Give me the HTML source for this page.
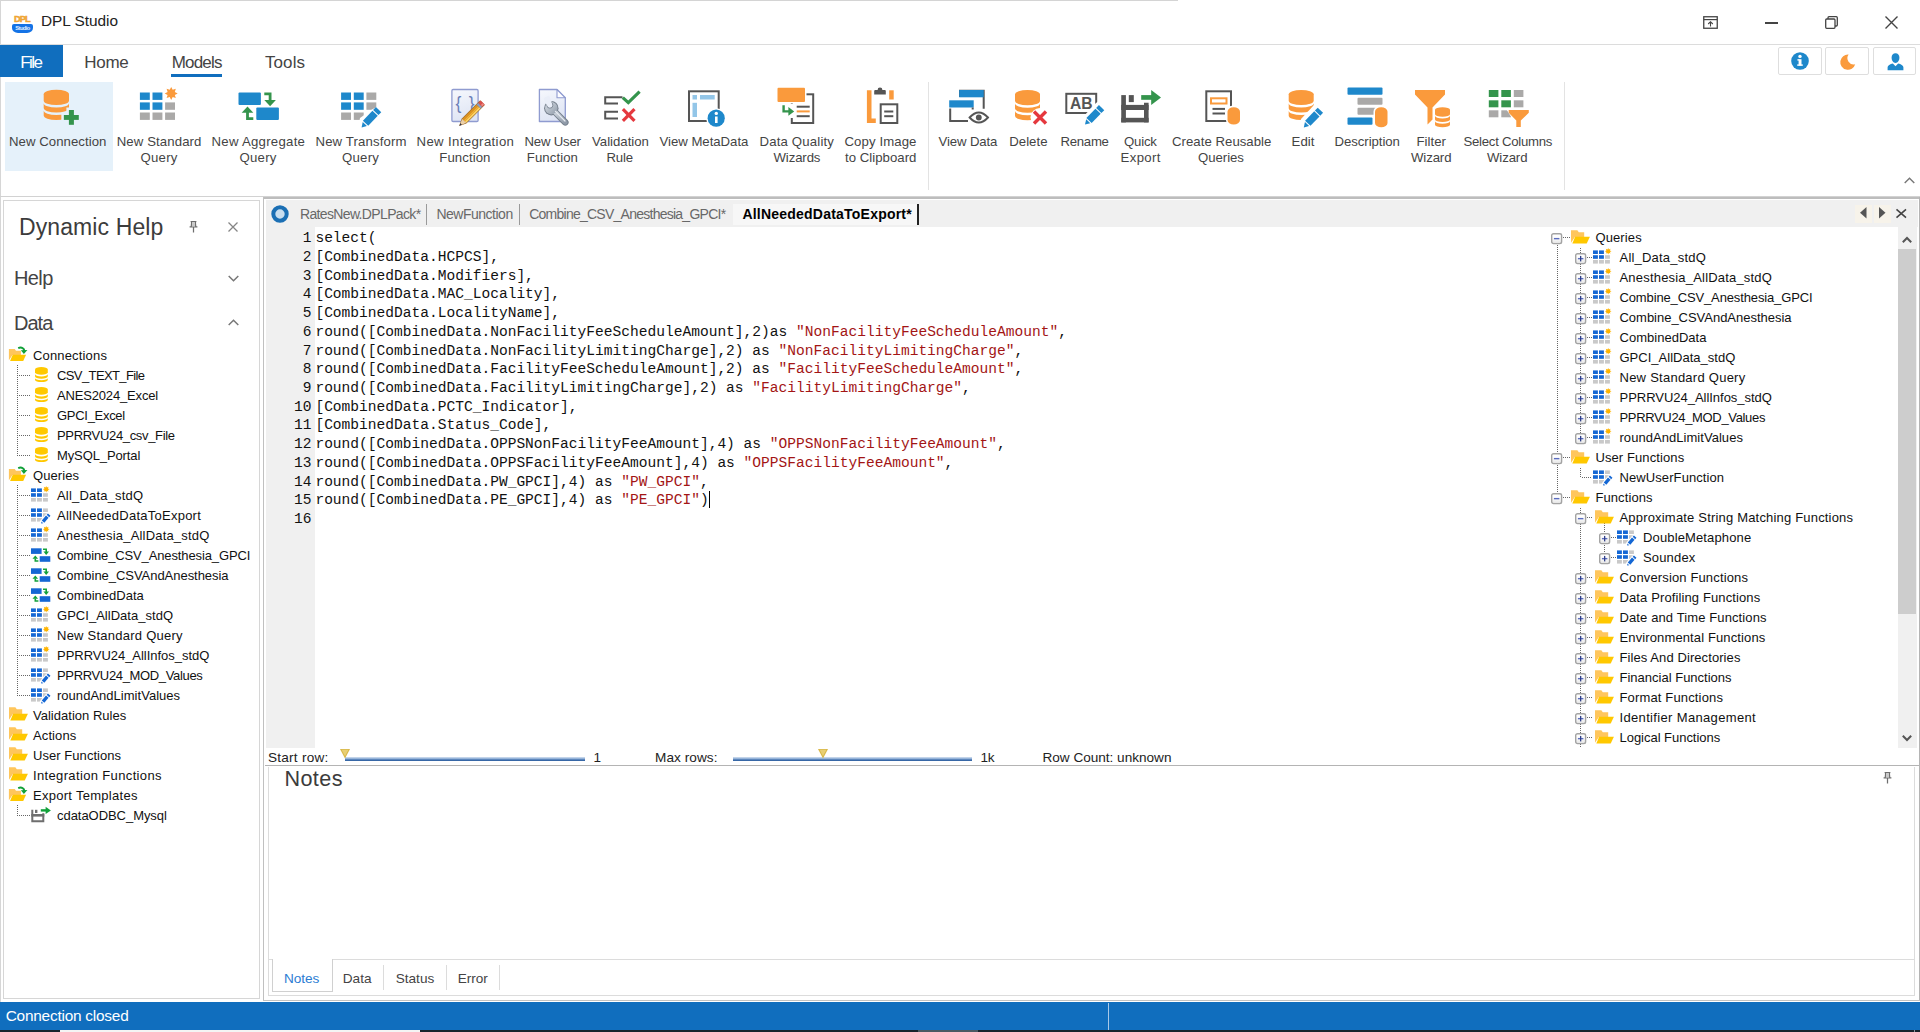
<!DOCTYPE html>
<html><head><meta charset="utf-8"><title>DPL Studio</title>
<style>
html,body{margin:0;padding:0;}
body{width:1920px;height:1032px;position:relative;overflow:hidden;background:#fff;font-family:"Liberation Sans",sans-serif;}
.t{position:absolute;white-space:pre;}
.r{position:absolute;}
svg{overflow:visible;}
.c{font-family:"Liberation Mono",monospace;font-size:14.578px;line-height:20px;color:#111;}
.s{color:#a31515;}
</style></head><body>
<div class="r" style="left:0.00px;top:0.00px;width:1178.00px;height:1.00px;background:#d4d4d4;"></div>
<div class="r" style="left:0.00px;top:0.00px;width:1.00px;height:1002.00px;background:#d6d6d6;"></div>
<div class="r" style="left:0.00px;top:44.00px;width:1920.00px;height:1.00px;background:#dcdcdc;"></div>
<span class="t" style="left:13.90px;top:13px;font-size:9.30px;line-height:13px;color:#efa535;font-weight:bold;letter-spacing:-0.850px;-webkit-text-stroke:0.5px #efa535;">DPL</span>
<div class="r" style="left:12.30px;top:24.00px;width:20.60px;height:8.70px;background:#1473e6;border-radius:2px 2px 6px 6px / 2px 2px 5px 5px;"></div>
<span class="t" style="left:15.30px;top:24px;font-size:5.70px;line-height:8px;color:#e6f0ff;font-weight:bold;letter-spacing:-0.546px;">Studio</span>
<span class="t" style="left:41.00px;top:10px;font-size:15.40px;line-height:22px;color:#222;letter-spacing:-0.037px;">DPL Studio</span>
<svg class="r" style="left:1703.00px;top:16.00px" width="15" height="13" viewBox="0 0 15 13"><rect x="0.75" y="0.75" width="13.5" height="11.5" fill="none" stroke="#444" stroke-width="1.3"/><path d="M0.75 3.6H14.25" stroke="#444" stroke-width="1.2"/><path d="M7.5 10.5V5.8M5.2 8L7.5 5.7L9.8 8" fill="none" stroke="#444" stroke-width="1.1"/></svg>
<div class="r" style="left:1765.00px;top:22.30px;width:12.50px;height:1.40px;background:#444;"></div>
<svg class="r" style="left:1824.50px;top:16.00px" width="13" height="13" viewBox="0 0 13 13"><rect x="0.7" y="3" width="9.3" height="9.3" rx="1" fill="none" stroke="#444" stroke-width="1.3"/><path d="M3 3V1.7a1 1 0 0 1 1-1H11.3a1 1 0 0 1 1 1V9a1 1 0 0 1-1 1H10" fill="none" stroke="#444" stroke-width="1.3"/></svg>
<svg class="r" style="left:1885.00px;top:16.20px" width="13" height="13" viewBox="0 0 13 13"><path d="M0.5 0.5L12.5 12.5M12.5 0.5L0.5 12.5" stroke="#444" stroke-width="1.4"/></svg>
<div class="r" style="left:0.00px;top:45.00px;width:62.50px;height:32.30px;background:#106ebe;"></div>
<span class="t" style="left:20.30px;top:51px;font-size:17.00px;line-height:24px;color:#fff;letter-spacing:-1.565px;">File</span>
<span class="t" style="left:84.20px;top:51px;font-size:17.00px;line-height:24px;color:#444444;letter-spacing:-0.249px;">Home</span>
<span class="t" style="left:171.70px;top:51px;font-size:17.00px;line-height:24px;color:#444444;letter-spacing:-0.800px;">Models</span>
<span class="t" style="left:265.00px;top:51px;font-size:17.00px;line-height:24px;color:#444444;letter-spacing:0.078px;">Tools</span>
<div class="r" style="left:171.30px;top:74.00px;width:51.20px;height:3.30px;background:#106ebe;"></div>
<div class="r" style="left:1778.30px;top:47.00px;width:43.60px;height:28.20px;background:#fff;border:1px solid #dedede;border-radius:2px;box-sizing:border-box;"></div>
<div class="r" style="left:1825.40px;top:47.00px;width:43.60px;height:28.20px;background:#fff;border:1px solid #dedede;border-radius:2px;box-sizing:border-box;"></div>
<div class="r" style="left:1872.90px;top:47.00px;width:43.60px;height:28.20px;background:#fff;border:1px solid #dedede;border-radius:2px;box-sizing:border-box;"></div>
<svg class="r" style="left:1791.00px;top:52.20px" width="18" height="18" viewBox="0 0 18 18"><circle cx="9" cy="9" r="8.8" fill="#1e88cb"/><rect x="7.6" y="7.2" width="2.9" height="6.3" fill="#fff"/><rect x="6.4" y="7.2" width="2" height="1.4" fill="#fff"/><rect x="6.2" y="12.4" width="5.6" height="1.4" fill="#fff"/><circle cx="9" cy="4.4" r="1.7" fill="#fff"/></svg>
<svg class="r" style="left:1839.50px;top:53.50px" width="16" height="16" viewBox="0 0 16 16"><path d="M8.6 0.6A7.6 7.6 0 1 0 15.2 10.2A6.2 6.2 0 0 1 8.6 0.6Z" fill="#fa9a3c"/></svg>
<svg class="r" style="left:1886.50px;top:52.50px" width="17" height="18" viewBox="0 0 17 18"><path d="M8.5 0.3c2.4 0 3.9 1.8 3.9 4.4c0 2.7-1.6 5.2-3.9 5.2S4.6 7.4 4.6 4.7C4.6 2.1 6.1 0.3 8.5 0.3Z" fill="#1e88cb"/><path d="M0.6 17.3V14.2c0-1.7 2.6-2.9 5.2-3.6L8.5 13.2L11.2 10.6c2.6 0.7 5.2 1.9 5.2 3.6V17.3Z" fill="#1e88cb"/></svg>
<svg class="r" style="left:1903.50px;top:177.00px" width="11" height="7" viewBox="0 0 11 7"><path d="M0.7 6L5.5 1.2L10.3 6" fill="none" stroke="#777" stroke-width="1.4"/></svg>
<div class="r" style="left:5.00px;top:81.50px;width:107.50px;height:89.70px;background:#e5f1fa;"></div>
<div class="r" style="left:928.00px;top:82.00px;width:1.00px;height:108.00px;background:#e3e3e3;"></div>
<div class="r" style="left:1564.00px;top:82.00px;width:1.00px;height:108.00px;background:#e3e3e3;"></div>
<span class="t" style="left:9.00px;top:133px;font-size:13.20px;line-height:18px;color:#444444;letter-spacing:0.050px;">New Connection</span>
<span class="t" style="left:116.75px;top:133px;font-size:13.20px;line-height:18px;color:#444444;letter-spacing:0.100px;">New Standard</span>
<span class="t" style="left:140.50px;top:149px;font-size:13.20px;line-height:18px;color:#444444;letter-spacing:0.264px;">Query</span>
<span class="t" style="left:211.50px;top:133px;font-size:13.20px;line-height:18px;color:#444444;letter-spacing:0.270px;">New Aggregate</span>
<span class="t" style="left:239.50px;top:149px;font-size:13.20px;line-height:18px;color:#444444;letter-spacing:0.264px;">Query</span>
<span class="t" style="left:315.50px;top:133px;font-size:13.20px;line-height:18px;color:#444444;letter-spacing:0.126px;">New Transform</span>
<span class="t" style="left:342.00px;top:149px;font-size:13.20px;line-height:18px;color:#444444;letter-spacing:0.264px;">Query</span>
<span class="t" style="left:416.50px;top:133px;font-size:13.20px;line-height:18px;color:#444444;letter-spacing:0.361px;">New Integration</span>
<span class="t" style="left:439.25px;top:149px;font-size:13.20px;line-height:18px;color:#444444;letter-spacing:0.089px;">Function</span>
<span class="t" style="left:524.50px;top:133px;font-size:13.20px;line-height:18px;color:#444444;letter-spacing:-0.206px;">New User</span>
<span class="t" style="left:526.75px;top:149px;font-size:13.20px;line-height:18px;color:#444444;letter-spacing:0.089px;">Function</span>
<span class="t" style="left:592.00px;top:133px;font-size:13.20px;line-height:18px;color:#444444;">Validation</span>
<span class="t" style="left:606.50px;top:149px;font-size:13.20px;line-height:18px;color:#444444;letter-spacing:-0.215px;">Rule</span>
<span class="t" style="left:659.50px;top:133px;font-size:13.20px;line-height:18px;color:#444444;letter-spacing:-0.023px;">View MetaData</span>
<span class="t" style="left:759.50px;top:133px;font-size:13.20px;line-height:18px;color:#444444;letter-spacing:0.170px;">Data Quality</span>
<span class="t" style="left:773.50px;top:149px;font-size:13.20px;line-height:18px;color:#444444;letter-spacing:-0.112px;">Wizards</span>
<span class="t" style="left:844.50px;top:133px;font-size:13.20px;line-height:18px;color:#444444;letter-spacing:0.092px;">Copy Image</span>
<span class="t" style="left:845.00px;top:149px;font-size:13.20px;line-height:18px;color:#444444;letter-spacing:0.030px;">to Clipboard</span>
<span class="t" style="left:938.50px;top:133px;font-size:13.20px;line-height:18px;color:#444444;letter-spacing:-0.116px;">View Data</span>
<span class="t" style="left:1009.25px;top:133px;font-size:13.20px;line-height:18px;color:#444444;letter-spacing:0.019px;">Delete</span>
<span class="t" style="left:1060.50px;top:133px;font-size:13.20px;line-height:18px;color:#444444;letter-spacing:-0.279px;">Rename</span>
<span class="t" style="left:1124.00px;top:133px;font-size:13.20px;line-height:18px;color:#444444;letter-spacing:-0.190px;">Quick</span>
<span class="t" style="left:1120.50px;top:149px;font-size:13.20px;line-height:18px;color:#444444;letter-spacing:0.370px;">Export</span>
<span class="t" style="left:1172.00px;top:133px;font-size:13.20px;line-height:18px;color:#444444;letter-spacing:0.031px;">Create Reusable</span>
<span class="t" style="left:1198.00px;top:149px;font-size:13.20px;line-height:18px;color:#444444;letter-spacing:-0.037px;">Queries</span>
<span class="t" style="left:1291.50px;top:133px;font-size:13.20px;line-height:18px;color:#444444;letter-spacing:0.085px;">Edit</span>
<span class="t" style="left:1334.50px;top:133px;font-size:13.20px;line-height:18px;color:#444444;letter-spacing:-0.053px;">Description</span>
<span class="t" style="left:1416.50px;top:133px;font-size:13.20px;line-height:18px;color:#444444;letter-spacing:0.034px;">Filter</span>
<span class="t" style="left:1411.00px;top:149px;font-size:13.20px;line-height:18px;color:#444444;letter-spacing:-0.114px;">Wizard</span>
<span class="t" style="left:1463.50px;top:133px;font-size:13.20px;line-height:18px;color:#444444;letter-spacing:-0.265px;">Select Columns</span>
<span class="t" style="left:1487.00px;top:149px;font-size:13.20px;line-height:18px;color:#444444;letter-spacing:-0.114px;">Wizard</span>
<svg class="r" style="left:0.00px;top:80.00px" width="1920" height="60" viewBox="0 80 1920 60"><path d="M43.70 94.15A12.65 4.35 0 0 1 69.00 94.15V100.68A12.65 4.35 0 0 1 43.70 100.68Z" fill="#fa9a3c"/><path d="M43.70 103.18A12.65 4.35 0 0 0 69.00 103.18V108.12A12.65 4.35 0 0 1 43.70 108.12Z" fill="#fa9a3c"/><path d="M43.70 110.61A12.65 4.35 0 0 0 69.00 110.61V115.55A12.65 4.35 0 0 1 43.70 115.55Z" fill="#fa9a3c"/><path d="M68.9 110H73.9V115H78.8V119.9H73.9V124.8H68.9V119.9H63.85V115H68.9Z" fill="#e5f1fa" stroke="#e5f1fa" stroke-width="5"/><rect x="68.90" y="110.00" width="5.00" height="14.80" fill="#34944c" rx="0"/><rect x="63.85" y="115.00" width="14.95" height="4.90" fill="#34944c" rx="0"/><rect x="139.90" y="92.50" width="9.90" height="7.40" fill="#1e88cb" rx="0"/><rect x="152.50" y="92.50" width="9.90" height="7.40" fill="#1e88cb" rx="0"/><rect x="139.90" y="102.40" width="9.90" height="7.40" fill="#1e88cb" rx="0"/><rect x="152.50" y="102.40" width="9.90" height="7.40" fill="#1e88cb" rx="0"/><rect x="165.10" y="102.40" width="9.90" height="7.40" fill="#aaa9a8" rx="0"/><rect x="139.90" y="112.50" width="9.90" height="7.40" fill="#aaa9a8" rx="0"/><rect x="152.50" y="112.50" width="9.90" height="7.40" fill="#aaa9a8" rx="0"/><rect x="165.10" y="112.50" width="9.90" height="7.40" fill="#aaa9a8" rx="0"/><polygon points="171.20,86.90 172.69,89.80 175.80,88.80 174.80,91.91 177.70,93.40 174.80,94.89 175.80,98.00 172.69,97.00 171.20,99.90 169.71,97.00 166.60,98.00 167.60,94.89 164.70,93.40 167.60,91.91 166.60,88.80 169.71,89.80" fill="#fa9a3c"/><rect x="238.50" y="92.50" width="22.40" height="12.40" fill="#1e88cb" rx="1"/><rect x="256.30" y="107.50" width="22.60" height="12.40" fill="#1e88cb" rx="1"/><path d="M264.3 93.8H270.1V101" fill="none" stroke="#34944c" stroke-width="2.8"/><polygon points="264.3,100 275.9,100 270.1,106.2" fill="#34944c"/><path d="M253.3 118.6H247.5V112" fill="none" stroke="#34944c" stroke-width="2.8"/><polygon points="241.7,112.8 253.3,112.8 247.5,106.6" fill="#34944c"/><rect x="341.10" y="92.50" width="9.90" height="7.40" fill="#1e88cb" rx="0"/><rect x="353.80" y="92.50" width="9.90" height="7.40" fill="#1e88cb" rx="0"/><rect x="366.40" y="92.50" width="9.90" height="7.40" fill="#aaa9a8" rx="0"/><rect x="341.10" y="102.40" width="9.90" height="7.40" fill="#1e88cb" rx="0"/><rect x="353.80" y="102.40" width="9.90" height="7.40" fill="#1e88cb" rx="0"/><rect x="366.40" y="102.40" width="9.90" height="7.40" fill="#aaa9a8" rx="0"/><rect x="341.10" y="112.50" width="9.90" height="7.40" fill="#aaa9a8" rx="0"/><rect x="353.80" y="112.50" width="9.90" height="7.40" fill="#aaa9a8" rx="0"/><polygon points="372,109.5 380,105 385,111 368,127 358,129 360,118" fill="#fff"/><polygon points="381.28,112.16 378.46,115.10 373.11,109.99 375.92,107.04" fill="#1e88cb"/><polygon points="377.77,115.82 368.25,125.80 362.90,120.69 372.42,110.71" fill="#1e88cb"/><polygon points="366.90,126.03 361.60,127.40 362.72,122.04" fill="#1e88cb"/><defs><linearGradient id="dg" x1="0" y1="0" x2="0.3" y2="1"><stop offset="0" stop-color="#f6f8fd"/><stop offset="1" stop-color="#dfe5f4"/></linearGradient><linearGradient id="wg" x1="0" y1="0" x2="1" y2="1"><stop offset="0" stop-color="#d9dfe7"/><stop offset="1" stop-color="#8f9aa8"/></linearGradient></defs><rect x="451.9" y="89.5" width="26.2" height="32" rx="1.2" fill="url(#dg)" stroke="#8f9bd0" stroke-width="1.3"/><text x="455.6" y="109.3" font-size="17.5" fill="#6a7fb8" font-family="Liberation Sans, sans-serif" textLength="19" lengthAdjust="spacing">{}</text><polygon points="484.82,104.95 466.33,123.44 459.12,125.98 461.66,118.77 480.15,100.28" fill="#9a6a2a"/><polygon points="484.68,104.38 482.13,106.93 478.17,102.97 480.72,100.42" fill="#d9504c"/><polygon points="482.67,103.22 480.83,105.06 482.12,106.35 483.96,104.51" fill="#f08a84"/><polygon points="482.13,106.93 480.44,108.62 476.48,104.66 478.17,102.97" fill="#8a9cc4"/><polygon points="480.44,108.62 466.19,122.87 464.87,121.55 479.12,107.30" fill="#ffd566"/><polygon points="479.12,107.30 464.87,121.55 463.55,120.23 477.80,105.98" fill="#f5b233"/><polygon points="477.80,105.98 463.55,120.23 462.23,118.91 476.48,104.66" fill="#dc9220"/><polygon points="466.19,122.87 461.81,124.72 460.38,123.29 462.23,118.91" fill="#ecd0a8"/><polygon points="461.81,124.72 459.40,125.70 460.38,123.29" fill="#2b3350"/><path d="M539.4 89.5H557L565.3 97.8V121.5H539.4Z" fill="url(#dg)" stroke="#8f9bd0" stroke-width="1.3" stroke-linejoin="round"/><path d="M557 89.5V97.8H565.3Z" fill="#fdfdff" stroke="#8f9bd0" stroke-width="1.1" stroke-linejoin="round"/><path d="M553.5 110.5L565.3 122.3" stroke="#76808d" stroke-width="6.6" stroke-linecap="round"/><circle cx="551.3" cy="108.2" r="7.2" fill="#76808d"/><path d="M553.5 110.5L565.3 122.3" stroke="url(#wg)" stroke-width="4.6" stroke-linecap="round"/><circle cx="551.3" cy="108.2" r="6.2" fill="url(#wg)"/><path d="M555.4 111.4L565 121" stroke="#e6eaf0" stroke-width="1.2" stroke-linecap="round"/><polygon points="552.65,104.00 549.05,95.75 543.55,98.15 547.15,106.40" fill="#eaeef8"/><circle cx="549.90" cy="105.20" r="3.00" fill="#eaeef8" stroke="#76808d" stroke-width="0.9"/><polygon points="552.19,104.20 548.59,95.95 544.01,97.95 547.61,106.20" fill="#eaeef8"/><path d="M622.5 97.2H605.2V103.5H618" fill="none" stroke="#555555" stroke-width="2"/><path d="M618 111.7H605.2V118.5H618" fill="none" stroke="#555555" stroke-width="2"/><path d="M622.8 97.6L628.3 102.6L639.6 91.6" fill="none" stroke="#34944c" stroke-width="3.2"/><path d="M622.90 109.20L634.50 120.80" stroke="#e5383e" stroke-width="3.2" fill="none"/><path d="M634.50 109.20L622.90 120.80" stroke="#e5383e" stroke-width="3.2" fill="none"/><rect x="689.00" y="91.30" width="29.70" height="29.70" fill="none" stroke="#555555" stroke-width="2"/><rect x="692.50" y="95.00" width="4.50" height="4.50" fill="#93c6e8" rx="0"/><rect x="700.00" y="95.00" width="14.70" height="4.50" fill="#93c6e8" rx="0"/><rect x="692.50" y="102.80" width="4.50" height="14.20" fill="#93c6e8" rx="0"/><circle cx="716.2" cy="118.2" r="10" fill="#fff"/><circle cx="716.2" cy="118.2" r="8.6" fill="#1e88cb"/><rect x="715.00" y="116.50" width="2.60" height="6.50" fill="#fff" rx="0"/><circle cx="716.3" cy="113.4" r="1.7" fill="#fff"/><rect x="791.80" y="94.30" width="21.40" height="28.70" fill="none" stroke="#555555" stroke-width="2"/><rect x="776.00" y="87.00" width="30.50" height="16.50" fill="#fff" rx="0"/><rect x="777.50" y="87.80" width="27.50" height="14.20" fill="#fa9a3c" rx="1"/><path d="M796.70 106.70L809.70 106.70" stroke="#555555" stroke-width="2" fill="none"/><path d="M796.70 111.40L809.70 111.40" stroke="#fa9a3c" stroke-width="2" fill="none"/><path d="M796.70 116.20L809.70 116.20" stroke="#555555" stroke-width="2" fill="none"/><rect x="781.00" y="104.00" width="15.00" height="14.00" fill="#fff" rx="0"/><path d="M783.6 105.3V111.4H789" fill="none" stroke="#34944c" stroke-width="2.4"/><polygon points="788.4,107 794.2,111.4 788.4,115.8" fill="#34944c"/><path d="M869.2 90.3V120.7H875.8" fill="none" stroke="#fa9a3c" stroke-width="4.6"/><rect x="889.20" y="90.30" width="4.50" height="9.20" fill="#fa9a3c" rx="0"/><path d="M874.2 94.5V91a1 1 0 0 1 1-1H877.6a2.4 2.4 0 0 1 4.8 0H884.8a1 1 0 0 1 1 1V94.5Z" fill="#555555"/><rect x="880.70" y="104.30" width="16.60" height="18.70" fill="none" stroke="#555555" stroke-width="2"/><path d="M884.20 111.50L893.30 111.50" stroke="#555555" stroke-width="2" fill="none"/><path d="M884.20 116.20L893.30 116.20" stroke="#555555" stroke-width="2" fill="none"/><path d="M960 97V90.8H983.7V108.7" fill="none" stroke="#555555" stroke-width="2"/><rect x="959.20" y="90.00" width="24.50" height="7.30" fill="#1e88cb" rx="0"/><path d="M950.2 107V121H968" fill="none" stroke="#555555" stroke-width="2"/><rect x="947.50" y="99.00" width="28.00" height="9.50" fill="#fff" rx="0"/><rect x="949.20" y="100.30" width="24.50" height="7.20" fill="#1e88cb" rx="0"/><path d="M972.70 107.50L972.70 109.50" stroke="#555555" stroke-width="2" fill="none"/><path d="M969.6 117.5Q978.8 107.5 988 117.5Q978.8 127.5 969.6 117.5Z" fill="#fff" stroke="#555555" stroke-width="1.9"/><circle cx="978.8" cy="117.5" r="2.9" fill="#555555"/><path d="M1015.00 94.30A12.50 4.30 0 0 1 1040.00 94.30V100.88A12.50 4.30 0 0 1 1015.00 100.88Z" fill="#fa9a3c"/><path d="M1015.00 103.39A12.50 4.30 0 0 0 1040.00 103.39V108.44A12.50 4.30 0 0 1 1015.00 108.44Z" fill="#fa9a3c"/><path d="M1015.00 110.95A12.50 4.30 0 0 0 1040.00 110.95V116.00A12.50 4.30 0 0 1 1015.00 116.00Z" fill="#fa9a3c"/><circle cx="1040" cy="117.5" r="9.5" fill="#fff"/><path d="M1034.00 111.50L1046.00 123.50" stroke="#e5383e" stroke-width="3.4" fill="none"/><path d="M1046.00 111.50L1034.00 123.50" stroke="#e5383e" stroke-width="3.4" fill="none"/><rect x="1066.30" y="93.80" width="29.90" height="19.20" fill="none" stroke="#555555" stroke-width="2"/><text x="1070" y="108.8" font-size="15.6" font-weight="bold" fill="#555555" font-family="Liberation Sans, sans-serif" textLength="22.6" lengthAdjust="spacingAndGlyphs">AB</text><polygon points="1096,103 1103,98 1109,106 1090,126 1080,128 1083,117" fill="#fff"/><polygon points="1104.25,110.18 1101.40,113.10 1096.11,107.93 1098.95,105.02" fill="#1e88cb"/><polygon points="1100.71,113.81 1091.66,123.07 1086.37,117.90 1095.41,108.64" fill="#1e88cb"/><polygon points="1090.31,123.29 1085.00,124.60 1086.18,119.26" fill="#1e88cb"/><rect x="1121.25" y="95.10" width="4.65" height="27.30" fill="#555555" rx="0"/><rect x="1128.80" y="95.10" width="5.00" height="7.00" fill="#555555" rx="0"/><rect x="1121.25" y="104.90" width="27.35" height="5.10" fill="#555555" rx="0"/><rect x="1144.00" y="102.75" width="4.60" height="19.65" fill="#555555" rx="0"/><rect x="1121.25" y="117.80" width="27.35" height="4.60" fill="#555555" rx="0"/><rect x="1141.20" y="95.10" width="10.80" height="4.70" fill="#34944c" rx="0"/><polygon points="1151.2,90.1 1161,97.5 1151.2,104.9" fill="#34944c"/><rect x="1206.30" y="91.30" width="24.70" height="29.70" fill="none" stroke="#555555" stroke-width="2"/><rect x="1211.00" y="98.30" width="15.50" height="5.20" fill="none" stroke="#fa9a3c" stroke-width="2"/><path d="M1212.50 108.90L1225.00 108.90" stroke="#555555" stroke-width="2" fill="none"/><path d="M1212.50 113.50L1225.00 113.50" stroke="#555555" stroke-width="2" fill="none"/><rect x="1226.00" y="105.80" width="15.50" height="20.20" fill="#fff" rx="6"/><rect x="1227.50" y="107.30" width="12.50" height="17.20" rx="6.25" ry="4.40" fill="#fa9a3c"/><path d="M1288.70 94.30A12.50 4.30 0 0 1 1313.70 94.30V100.81A12.50 4.30 0 0 1 1288.70 100.81Z" fill="#fa9a3c"/><path d="M1288.70 103.30A12.50 4.30 0 0 0 1313.70 103.30V108.25A12.50 4.30 0 0 1 1288.70 108.25Z" fill="#fa9a3c"/><path d="M1288.70 110.74A12.50 4.30 0 0 0 1313.70 110.74V115.70A12.50 4.30 0 0 1 1288.70 115.70Z" fill="#fa9a3c"/><polygon points="1314,105 1321,100.5 1327,108 1309,127 1299,130 1301,119" fill="#fff"/><polygon points="1323.06,112.77 1320.24,115.70 1314.91,110.56 1317.74,107.63" fill="#1e88cb"/><polygon points="1319.54,116.42 1310.46,125.83 1305.13,120.69 1314.22,111.28" fill="#1e88cb"/><polygon points="1309.11,126.06 1303.80,127.40 1304.95,122.05" fill="#1e88cb"/><rect x="1347.50" y="87.50" width="35.00" height="7.30" fill="#1e88cb" rx="1"/><rect x="1357.50" y="97.80" width="25.00" height="7.00" fill="#aaa9a8" rx="1"/><rect x="1357.50" y="107.80" width="25.00" height="7.00" fill="#aaa9a8" rx="1"/><rect x="1347.50" y="117.50" width="25.00" height="7.30" fill="#1e88cb" rx="1"/><rect x="1373.50" y="105.80" width="15.50" height="23.00" fill="#fff" rx="6"/><rect x="1375.00" y="107.30" width="12.50" height="20.00" rx="6.25" ry="4.40" fill="#fa9a3c"/><path d="M1415 90H1445V94.5L1432.5 107.5V119.5L1427.5 124.5V107.5L1415 94.5Z" fill="#fa9a3c"/><rect x="1433.50" y="106.00" width="18.00" height="22.50" fill="#fff" rx="5"/><path d="M1435.00 109.85A7.50 2.55 0 0 1 1450.00 109.85V114.19A7.50 2.55 0 0 1 1435.00 114.19Z" fill="#fa9a3c"/><path d="M1435.00 115.85A7.50 2.55 0 0 0 1450.00 115.85V119.47A7.50 2.55 0 0 1 1435.00 119.47Z" fill="#fa9a3c"/><path d="M1435.00 121.13A7.50 2.55 0 0 0 1450.00 121.13V124.75A7.50 2.55 0 0 1 1435.00 124.75Z" fill="#fa9a3c"/><rect x="1488.80" y="90.00" width="9.60" height="7.00" fill="#34944c" rx="0"/><rect x="1501.30" y="90.00" width="9.60" height="7.00" fill="#34944c" rx="0"/><rect x="1513.80" y="90.00" width="9.60" height="7.00" fill="#aaa9a8" rx="0"/><rect x="1488.80" y="100.30" width="9.60" height="7.00" fill="#34944c" rx="0"/><rect x="1501.30" y="100.30" width="9.60" height="7.00" fill="#34944c" rx="0"/><rect x="1513.80" y="100.30" width="9.60" height="7.00" fill="#aaa9a8" rx="0"/><rect x="1488.80" y="110.30" width="9.60" height="7.00" fill="#aaa9a8" rx="0"/><rect x="1501.30" y="110.30" width="9.60" height="7.00" fill="#aaa9a8" rx="0"/><polygon points="1505.8,108.5 1531,108.5 1531,114 1522.5,122 1522.5,128.5 1514.5,128.5 1514.5,122" fill="#fff"/><path d="M1508.7 110H1528.8V112.8L1520.8 120.5V127H1516.3V120.5L1508.7 112.8Z" fill="#fa9a3c"/></svg>
<div class="r" style="left:0.00px;top:195.70px;width:1920.00px;height:1.80px;background:#d2d2d2;"></div>
<!-- left panel -->
<div class="r" style="left:3.00px;top:200.00px;width:257.00px;height:799.00px;background:#fff;border:1px solid #d6d6d6;box-sizing:border-box;"></div>
<span class="t" style="left:19.00px;top:211px;font-size:23.00px;line-height:32px;color:#3c3c3c;letter-spacing:0.104px;">Dynamic Help</span>
<svg class="r" style="left:188.50px;top:221.00px" width="9" height="12" viewBox="0 0 9 12"><path d="M1.6 0.7H7.4M2.7 0.7L2.3 5.3M6.3 0.7L6.7 5.3M0.6 5.9H8.4M4.5 6V11.4" fill="none" stroke="#6e6e6e" stroke-width="1.25"/><path d="M3.2 1.2H5.8L6.1 5.4H2.9Z" fill="#c9c9c9"/></svg>
<svg class="r" style="left:228.00px;top:222.00px" width="10" height="10" viewBox="0 0 10 10"><path d="M0.5 0.5L9.5 9.5M9.5 0.5L0.5 9.5" stroke="#858585" stroke-width="1.25"/></svg>
<span class="t" style="left:14.00px;top:264px;font-size:20.00px;line-height:28px;color:#444444;letter-spacing:-0.610px;">Help</span>
<span class="t" style="left:14.00px;top:309px;font-size:20.00px;line-height:28px;color:#444444;letter-spacing:-0.983px;">Data</span>
<svg class="r" style="left:227.50px;top:274.50px" width="11" height="7" viewBox="0 0 11 7"><path d="M0.7 1L5.5 5.8L10.3 1" fill="none" stroke="#777" stroke-width="1.5"/></svg>
<svg class="r" style="left:227.50px;top:318.50px" width="11" height="7" viewBox="0 0 11 7"><path d="M0.7 6L5.5 1.2L10.3 6" fill="none" stroke="#777" stroke-width="1.5"/></svg>
<span class="t" style="left:33.00px;top:347px;font-size:13.00px;line-height:18px;color:#111;letter-spacing:0.163px;">Connections</span>
<svg class="r" style="left:8.00px;top:346.00px" width="20" height="17" viewBox="0 0 20 17"><path d="M0.9 3H6.7L8 4.7H12.9V9H4.5L0.9 14.3Z" fill="#ffc65c"/><path d="M4.7 8.8H18.1L15.2 14.9H2.1Z" fill="#ffc800"/><path d="M10.2 2.2C13.6 0.6 16.4 2.4 16.3 5" fill="none" stroke="#12a13a" stroke-width="2"/><polygon points="12.8,4.2 19.4,4 15.9,8" fill="#12a13a"/></svg>
<span class="t" style="left:57.00px;top:367px;font-size:13.00px;line-height:18px;color:#111;letter-spacing:-0.605px;">CSV_TEXT_File</span>
<div class="r" style="left:19.00px;top:375.00px;width:12.00px;height:1.00px;background:repeating-linear-gradient(to right,#666 0 1px,transparent 1px 2px);"></div>
<svg class="r" style="left:34.80px;top:367.30px" width="13" height="16" viewBox="0 0 13 16"><path d="M0 2.6A6.4 2.6 0 0 1 12.8 2.6V5.3A6.4 2.4 0 0 1 0 5.3Z" fill="#ffc800"/><path d="M0 7A6.4 2.4 0 0 0 12.8 7V9.3A6.4 2.4 0 0 1 0 9.3Z" fill="#ffc800"/><path d="M0 10.9A6.4 2.4 0 0 0 12.8 10.9V12.7A6.4 2.4 0 0 1 0 12.7Z" fill="#ffc800"/></svg>
<span class="t" style="left:57.00px;top:387px;font-size:13.00px;line-height:18px;color:#111;letter-spacing:-0.165px;">ANES2024_Excel</span>
<div class="r" style="left:19.00px;top:395.00px;width:12.00px;height:1.00px;background:repeating-linear-gradient(to right,#666 0 1px,transparent 1px 2px);"></div>
<svg class="r" style="left:34.80px;top:387.30px" width="13" height="16" viewBox="0 0 13 16"><path d="M0 2.6A6.4 2.6 0 0 1 12.8 2.6V5.3A6.4 2.4 0 0 1 0 5.3Z" fill="#ffc800"/><path d="M0 7A6.4 2.4 0 0 0 12.8 7V9.3A6.4 2.4 0 0 1 0 9.3Z" fill="#ffc800"/><path d="M0 10.9A6.4 2.4 0 0 0 12.8 10.9V12.7A6.4 2.4 0 0 1 0 12.7Z" fill="#ffc800"/></svg>
<span class="t" style="left:57.00px;top:407px;font-size:13.00px;line-height:18px;color:#111;letter-spacing:-0.289px;">GPCI_Excel</span>
<div class="r" style="left:19.00px;top:415.00px;width:12.00px;height:1.00px;background:repeating-linear-gradient(to right,#666 0 1px,transparent 1px 2px);"></div>
<svg class="r" style="left:34.80px;top:407.30px" width="13" height="16" viewBox="0 0 13 16"><path d="M0 2.6A6.4 2.6 0 0 1 12.8 2.6V5.3A6.4 2.4 0 0 1 0 5.3Z" fill="#ffc800"/><path d="M0 7A6.4 2.4 0 0 0 12.8 7V9.3A6.4 2.4 0 0 1 0 9.3Z" fill="#ffc800"/><path d="M0 10.9A6.4 2.4 0 0 0 12.8 10.9V12.7A6.4 2.4 0 0 1 0 12.7Z" fill="#ffc800"/></svg>
<span class="t" style="left:57.00px;top:427px;font-size:13.00px;line-height:18px;color:#111;letter-spacing:-0.326px;">PPRRVU24_csv_File</span>
<div class="r" style="left:19.00px;top:435.00px;width:12.00px;height:1.00px;background:repeating-linear-gradient(to right,#666 0 1px,transparent 1px 2px);"></div>
<svg class="r" style="left:34.80px;top:427.30px" width="13" height="16" viewBox="0 0 13 16"><path d="M0 2.6A6.4 2.6 0 0 1 12.8 2.6V5.3A6.4 2.4 0 0 1 0 5.3Z" fill="#ffc800"/><path d="M0 7A6.4 2.4 0 0 0 12.8 7V9.3A6.4 2.4 0 0 1 0 9.3Z" fill="#ffc800"/><path d="M0 10.9A6.4 2.4 0 0 0 12.8 10.9V12.7A6.4 2.4 0 0 1 0 12.7Z" fill="#ffc800"/></svg>
<span class="t" style="left:57.00px;top:447px;font-size:13.00px;line-height:18px;color:#111;letter-spacing:-0.112px;">MySQL_Portal</span>
<div class="r" style="left:19.00px;top:455.00px;width:12.00px;height:1.00px;background:repeating-linear-gradient(to right,#666 0 1px,transparent 1px 2px);"></div>
<svg class="r" style="left:34.80px;top:447.30px" width="13" height="16" viewBox="0 0 13 16"><path d="M0 2.6A6.4 2.6 0 0 1 12.8 2.6V5.3A6.4 2.4 0 0 1 0 5.3Z" fill="#ffc800"/><path d="M0 7A6.4 2.4 0 0 0 12.8 7V9.3A6.4 2.4 0 0 1 0 9.3Z" fill="#ffc800"/><path d="M0 10.9A6.4 2.4 0 0 0 12.8 10.9V12.7A6.4 2.4 0 0 1 0 12.7Z" fill="#ffc800"/></svg>
<span class="t" style="left:33.00px;top:467px;font-size:13.00px;line-height:18px;color:#111;letter-spacing:0.080px;">Queries</span>
<svg class="r" style="left:8.00px;top:466.00px" width="20" height="17" viewBox="0 0 20 17"><path d="M0.9 3H6.7L8 4.7H12.9V9H4.5L0.9 14.3Z" fill="#ffc65c"/><path d="M4.7 8.8H18.1L15.2 14.9H2.1Z" fill="#ffc800"/><path d="M10.2 2.2C13.6 0.6 16.4 2.4 16.3 5" fill="none" stroke="#12a13a" stroke-width="2"/><polygon points="12.8,4.2 19.4,4 15.9,8" fill="#12a13a"/></svg>
<span class="t" style="left:57.00px;top:487px;font-size:13.00px;line-height:18px;color:#111;letter-spacing:0.190px;">All_Data_stdQ</span>
<div class="r" style="left:19.00px;top:495.00px;width:12.00px;height:1.00px;background:repeating-linear-gradient(to right,#666 0 1px,transparent 1px 2px);"></div>
<svg class="r" style="left:31.00px;top:486.50px" width="18" height="15" viewBox="0 0 18 15"><rect x="0" y="1.4" width="4.9" height="3.6" fill="#1467d4"/><rect x="6" y="1.4" width="4.9" height="3.6" fill="#1467d4"/><rect x="0" y="6.2" width="4.9" height="3.6" fill="#1467d4"/><rect x="6" y="6.2" width="4.9" height="3.6" fill="#1467d4"/><rect x="12" y="6.2" width="4.9" height="3.6" fill="#c9c9c9"/><rect x="0" y="11" width="4.9" height="3.6" fill="#c9c9c9"/><rect x="6" y="11" width="4.9" height="3.6" fill="#c9c9c9"/><rect x="12" y="11" width="4.9" height="3.6" fill="#c9c9c9"/><polygon points="15.20,-1.10 15.93,0.44 17.53,-0.13 16.96,1.47 18.50,2.20 16.96,2.93 17.53,4.53 15.93,3.96 15.20,5.50 14.47,3.96 12.87,4.53 13.44,2.93 11.90,2.20 13.44,1.47 12.87,-0.13 14.47,0.44" fill="#ffb400"/></svg>
<span class="t" style="left:57.00px;top:507px;font-size:13.00px;line-height:18px;color:#111;letter-spacing:0.253px;">AllNeededDataToExport</span>
<div class="r" style="left:19.00px;top:515.00px;width:12.00px;height:1.00px;background:repeating-linear-gradient(to right,#666 0 1px,transparent 1px 2px);"></div>
<svg class="r" style="left:31.00px;top:506.50px" width="21" height="18" viewBox="0 0 21 18"><rect x="0" y="1.4" width="4.9" height="3.6" fill="#1467d4"/><rect x="6" y="1.4" width="4.9" height="3.6" fill="#1467d4"/><rect x="12" y="1.4" width="4.9" height="3.6" fill="#c9c9c9"/><rect x="0" y="6.2" width="4.9" height="3.6" fill="#1467d4"/><rect x="6" y="6.2" width="4.9" height="3.6" fill="#1467d4"/><rect x="12" y="6.2" width="4.9" height="3.6" fill="#c9c9c9"/><rect x="0" y="11" width="4.9" height="3.6" fill="#c9c9c9"/><rect x="6" y="11" width="4.9" height="3.6" fill="#c9c9c9"/><polygon points="15,7 18,5 21,8 12,18 8,18 9,14" fill="#fff"/><polygon points="19.47,8.73 18.23,10.13 15.69,7.87 16.93,6.47" fill="#1467d4"/><polygon points="17.56,10.87 13.30,15.67 10.76,13.42 15.02,8.62" fill="#1467d4"/><polygon points="12.29,16.25 10.20,16.60 10.31,14.49" fill="#1467d4"/></svg>
<span class="t" style="left:57.00px;top:527px;font-size:13.00px;line-height:18px;color:#111;letter-spacing:0.189px;">Anesthesia_AllData_stdQ</span>
<div class="r" style="left:19.00px;top:535.00px;width:12.00px;height:1.00px;background:repeating-linear-gradient(to right,#666 0 1px,transparent 1px 2px);"></div>
<svg class="r" style="left:31.00px;top:526.50px" width="18" height="15" viewBox="0 0 18 15"><rect x="0" y="1.4" width="4.9" height="3.6" fill="#1467d4"/><rect x="6" y="1.4" width="4.9" height="3.6" fill="#1467d4"/><rect x="0" y="6.2" width="4.9" height="3.6" fill="#1467d4"/><rect x="6" y="6.2" width="4.9" height="3.6" fill="#1467d4"/><rect x="12" y="6.2" width="4.9" height="3.6" fill="#c9c9c9"/><rect x="0" y="11" width="4.9" height="3.6" fill="#c9c9c9"/><rect x="6" y="11" width="4.9" height="3.6" fill="#c9c9c9"/><rect x="12" y="11" width="4.9" height="3.6" fill="#c9c9c9"/><polygon points="15.20,-1.10 15.93,0.44 17.53,-0.13 16.96,1.47 18.50,2.20 16.96,2.93 17.53,4.53 15.93,3.96 15.20,5.50 14.47,3.96 12.87,4.53 13.44,2.93 11.90,2.20 13.44,1.47 12.87,-0.13 14.47,0.44" fill="#ffb400"/></svg>
<span class="t" style="left:57.00px;top:547px;font-size:13.00px;line-height:18px;color:#111;letter-spacing:-0.125px;">Combine_CSV_Anesthesia_GPCI</span>
<div class="r" style="left:19.00px;top:555.00px;width:12.00px;height:1.00px;background:repeating-linear-gradient(to right,#666 0 1px,transparent 1px 2px);"></div>
<svg class="r" style="left:31.00px;top:547.00px" width="20" height="16" viewBox="0 0 20 16"><rect x="0" y="1.3" width="10.6" height="5.6" fill="#1467d4"/><rect x="8.7" y="9.2" width="10.6" height="5.6" fill="#1467d4"/><path d="M12 2.2H15.2V5" fill="none" stroke="#12a13a" stroke-width="1.6"/><polygon points="12.4,4.6 18,4.6 15.2,8" fill="#12a13a"/><path d="M7.4 14H4.3V11.4" fill="none" stroke="#12a13a" stroke-width="1.6"/><polygon points="1.5,11.8 7.1,11.8 4.3,8.4" fill="#12a13a"/></svg>
<span class="t" style="left:57.00px;top:567px;font-size:13.00px;line-height:18px;color:#111;letter-spacing:-0.038px;">Combine_CSVAndAnesthesia</span>
<div class="r" style="left:19.00px;top:575.00px;width:12.00px;height:1.00px;background:repeating-linear-gradient(to right,#666 0 1px,transparent 1px 2px);"></div>
<svg class="r" style="left:31.00px;top:567.00px" width="20" height="16" viewBox="0 0 20 16"><rect x="0" y="1.3" width="10.6" height="5.6" fill="#1467d4"/><rect x="8.7" y="9.2" width="10.6" height="5.6" fill="#1467d4"/><path d="M12 2.2H15.2V5" fill="none" stroke="#12a13a" stroke-width="1.6"/><polygon points="12.4,4.6 18,4.6 15.2,8" fill="#12a13a"/><path d="M7.4 14H4.3V11.4" fill="none" stroke="#12a13a" stroke-width="1.6"/><polygon points="1.5,11.8 7.1,11.8 4.3,8.4" fill="#12a13a"/></svg>
<span class="t" style="left:57.00px;top:587px;font-size:13.00px;line-height:18px;color:#111;letter-spacing:0.007px;">CombinedData</span>
<div class="r" style="left:19.00px;top:595.00px;width:12.00px;height:1.00px;background:repeating-linear-gradient(to right,#666 0 1px,transparent 1px 2px);"></div>
<svg class="r" style="left:31.00px;top:587.00px" width="20" height="16" viewBox="0 0 20 16"><rect x="0" y="1.3" width="10.6" height="5.6" fill="#1467d4"/><rect x="8.7" y="9.2" width="10.6" height="5.6" fill="#1467d4"/><path d="M12 2.2H15.2V5" fill="none" stroke="#12a13a" stroke-width="1.6"/><polygon points="12.4,4.6 18,4.6 15.2,8" fill="#12a13a"/><path d="M7.4 14H4.3V11.4" fill="none" stroke="#12a13a" stroke-width="1.6"/><polygon points="1.5,11.8 7.1,11.8 4.3,8.4" fill="#12a13a"/></svg>
<span class="t" style="left:57.00px;top:607px;font-size:13.00px;line-height:18px;color:#111;letter-spacing:0.025px;">GPCI_AllData_stdQ</span>
<div class="r" style="left:19.00px;top:615.00px;width:12.00px;height:1.00px;background:repeating-linear-gradient(to right,#666 0 1px,transparent 1px 2px);"></div>
<svg class="r" style="left:31.00px;top:606.50px" width="18" height="15" viewBox="0 0 18 15"><rect x="0" y="1.4" width="4.9" height="3.6" fill="#1467d4"/><rect x="6" y="1.4" width="4.9" height="3.6" fill="#1467d4"/><rect x="0" y="6.2" width="4.9" height="3.6" fill="#1467d4"/><rect x="6" y="6.2" width="4.9" height="3.6" fill="#1467d4"/><rect x="12" y="6.2" width="4.9" height="3.6" fill="#c9c9c9"/><rect x="0" y="11" width="4.9" height="3.6" fill="#c9c9c9"/><rect x="6" y="11" width="4.9" height="3.6" fill="#c9c9c9"/><rect x="12" y="11" width="4.9" height="3.6" fill="#c9c9c9"/><polygon points="15.20,-1.10 15.93,0.44 17.53,-0.13 16.96,1.47 18.50,2.20 16.96,2.93 17.53,4.53 15.93,3.96 15.20,5.50 14.47,3.96 12.87,4.53 13.44,2.93 11.90,2.20 13.44,1.47 12.87,-0.13 14.47,0.44" fill="#ffb400"/></svg>
<span class="t" style="left:57.00px;top:627px;font-size:13.00px;line-height:18px;color:#111;letter-spacing:0.242px;">New Standard Query</span>
<div class="r" style="left:19.00px;top:635.00px;width:12.00px;height:1.00px;background:repeating-linear-gradient(to right,#666 0 1px,transparent 1px 2px);"></div>
<svg class="r" style="left:31.00px;top:626.50px" width="18" height="15" viewBox="0 0 18 15"><rect x="0" y="1.4" width="4.9" height="3.6" fill="#1467d4"/><rect x="6" y="1.4" width="4.9" height="3.6" fill="#1467d4"/><rect x="0" y="6.2" width="4.9" height="3.6" fill="#1467d4"/><rect x="6" y="6.2" width="4.9" height="3.6" fill="#1467d4"/><rect x="12" y="6.2" width="4.9" height="3.6" fill="#c9c9c9"/><rect x="0" y="11" width="4.9" height="3.6" fill="#c9c9c9"/><rect x="6" y="11" width="4.9" height="3.6" fill="#c9c9c9"/><rect x="12" y="11" width="4.9" height="3.6" fill="#c9c9c9"/><polygon points="15.20,-1.10 15.93,0.44 17.53,-0.13 16.96,1.47 18.50,2.20 16.96,2.93 17.53,4.53 15.93,3.96 15.20,5.50 14.47,3.96 12.87,4.53 13.44,2.93 11.90,2.20 13.44,1.47 12.87,-0.13 14.47,0.44" fill="#ffb400"/></svg>
<span class="t" style="left:57.00px;top:647px;font-size:13.00px;line-height:18px;color:#111;letter-spacing:-0.031px;">PPRRVU24_AllInfos_stdQ</span>
<div class="r" style="left:19.00px;top:655.00px;width:12.00px;height:1.00px;background:repeating-linear-gradient(to right,#666 0 1px,transparent 1px 2px);"></div>
<svg class="r" style="left:31.00px;top:646.50px" width="18" height="15" viewBox="0 0 18 15"><rect x="0" y="1.4" width="4.9" height="3.6" fill="#1467d4"/><rect x="6" y="1.4" width="4.9" height="3.6" fill="#1467d4"/><rect x="0" y="6.2" width="4.9" height="3.6" fill="#1467d4"/><rect x="6" y="6.2" width="4.9" height="3.6" fill="#1467d4"/><rect x="12" y="6.2" width="4.9" height="3.6" fill="#c9c9c9"/><rect x="0" y="11" width="4.9" height="3.6" fill="#c9c9c9"/><rect x="6" y="11" width="4.9" height="3.6" fill="#c9c9c9"/><rect x="12" y="11" width="4.9" height="3.6" fill="#c9c9c9"/><polygon points="15.20,-1.10 15.93,0.44 17.53,-0.13 16.96,1.47 18.50,2.20 16.96,2.93 17.53,4.53 15.93,3.96 15.20,5.50 14.47,3.96 12.87,4.53 13.44,2.93 11.90,2.20 13.44,1.47 12.87,-0.13 14.47,0.44" fill="#ffb400"/></svg>
<span class="t" style="left:57.00px;top:667px;font-size:13.00px;line-height:18px;color:#111;letter-spacing:-0.343px;">PPRRVU24_MOD_Values</span>
<div class="r" style="left:19.00px;top:675.00px;width:12.00px;height:1.00px;background:repeating-linear-gradient(to right,#666 0 1px,transparent 1px 2px);"></div>
<svg class="r" style="left:31.00px;top:666.50px" width="21" height="18" viewBox="0 0 21 18"><rect x="0" y="1.4" width="4.9" height="3.6" fill="#1467d4"/><rect x="6" y="1.4" width="4.9" height="3.6" fill="#1467d4"/><rect x="12" y="1.4" width="4.9" height="3.6" fill="#c9c9c9"/><rect x="0" y="6.2" width="4.9" height="3.6" fill="#1467d4"/><rect x="6" y="6.2" width="4.9" height="3.6" fill="#1467d4"/><rect x="12" y="6.2" width="4.9" height="3.6" fill="#c9c9c9"/><rect x="0" y="11" width="4.9" height="3.6" fill="#c9c9c9"/><rect x="6" y="11" width="4.9" height="3.6" fill="#c9c9c9"/><polygon points="15,7 18,5 21,8 12,18 8,18 9,14" fill="#fff"/><polygon points="19.47,8.73 18.23,10.13 15.69,7.87 16.93,6.47" fill="#1467d4"/><polygon points="17.56,10.87 13.30,15.67 10.76,13.42 15.02,8.62" fill="#1467d4"/><polygon points="12.29,16.25 10.20,16.60 10.31,14.49" fill="#1467d4"/></svg>
<span class="t" style="left:57.00px;top:687px;font-size:13.00px;line-height:18px;color:#111;letter-spacing:0.027px;">roundAndLimitValues</span>
<div class="r" style="left:19.00px;top:695.00px;width:12.00px;height:1.00px;background:repeating-linear-gradient(to right,#666 0 1px,transparent 1px 2px);"></div>
<svg class="r" style="left:31.00px;top:686.50px" width="21" height="18" viewBox="0 0 21 18"><rect x="0" y="1.4" width="4.9" height="3.6" fill="#1467d4"/><rect x="6" y="1.4" width="4.9" height="3.6" fill="#1467d4"/><rect x="12" y="1.4" width="4.9" height="3.6" fill="#c9c9c9"/><rect x="0" y="6.2" width="4.9" height="3.6" fill="#1467d4"/><rect x="6" y="6.2" width="4.9" height="3.6" fill="#1467d4"/><rect x="12" y="6.2" width="4.9" height="3.6" fill="#c9c9c9"/><rect x="0" y="11" width="4.9" height="3.6" fill="#c9c9c9"/><rect x="6" y="11" width="4.9" height="3.6" fill="#c9c9c9"/><polygon points="15,7 18,5 21,8 12,18 8,18 9,14" fill="#fff"/><polygon points="19.47,8.73 18.23,10.13 15.69,7.87 16.93,6.47" fill="#1467d4"/><polygon points="17.56,10.87 13.30,15.67 10.76,13.42 15.02,8.62" fill="#1467d4"/><polygon points="12.29,16.25 10.20,16.60 10.31,14.49" fill="#1467d4"/></svg>
<span class="t" style="left:33.00px;top:707px;font-size:13.00px;line-height:18px;color:#111;letter-spacing:0.015px;">Validation Rules</span>
<svg class="r" style="left:7.70px;top:704.30px" width="22" height="18.7" viewBox="0 0 20 17"><path d="M0.9 3H6.7L8 4.7H12.9V9H4.5L0.9 14.3Z" fill="#ffc65c"/><path d="M4.7 8.8H18.1L15.2 14.9H2.1Z" fill="#ffc800"/></svg>
<span class="t" style="left:33.00px;top:727px;font-size:13.00px;line-height:18px;color:#111;letter-spacing:0.111px;">Actions</span>
<svg class="r" style="left:7.70px;top:724.30px" width="22" height="18.7" viewBox="0 0 20 17"><path d="M0.9 3H6.7L8 4.7H12.9V9H4.5L0.9 14.3Z" fill="#ffc65c"/><path d="M4.7 8.8H18.1L15.2 14.9H2.1Z" fill="#ffc800"/></svg>
<span class="t" style="left:33.00px;top:747px;font-size:13.00px;line-height:18px;color:#111;letter-spacing:0.052px;">User Functions</span>
<svg class="r" style="left:7.70px;top:744.30px" width="22" height="18.7" viewBox="0 0 20 17"><path d="M0.9 3H6.7L8 4.7H12.9V9H4.5L0.9 14.3Z" fill="#ffc65c"/><path d="M4.7 8.8H18.1L15.2 14.9H2.1Z" fill="#ffc800"/></svg>
<span class="t" style="left:33.00px;top:767px;font-size:13.00px;line-height:18px;color:#111;letter-spacing:0.355px;">Integration Functions</span>
<svg class="r" style="left:7.70px;top:764.30px" width="22" height="18.7" viewBox="0 0 20 17"><path d="M0.9 3H6.7L8 4.7H12.9V9H4.5L0.9 14.3Z" fill="#ffc65c"/><path d="M4.7 8.8H18.1L15.2 14.9H2.1Z" fill="#ffc800"/></svg>
<span class="t" style="left:33.00px;top:787px;font-size:13.00px;line-height:18px;color:#111;letter-spacing:0.280px;">Export Templates</span>
<svg class="r" style="left:8.00px;top:786.00px" width="20" height="17" viewBox="0 0 20 17"><path d="M0.9 3H6.7L8 4.7H12.9V9H4.5L0.9 14.3Z" fill="#ffc65c"/><path d="M4.7 8.8H18.1L15.2 14.9H2.1Z" fill="#ffc800"/><path d="M10.2 2.2C13.6 0.6 16.4 2.4 16.3 5" fill="none" stroke="#12a13a" stroke-width="2"/><polygon points="12.8,4.2 19.4,4 15.9,8" fill="#12a13a"/></svg>
<span class="t" style="left:57.00px;top:807px;font-size:13.00px;line-height:18px;color:#111;letter-spacing:-0.046px;">cdataODBC_Mysql</span>
<div class="r" style="left:19.00px;top:815.00px;width:12.00px;height:1.00px;background:repeating-linear-gradient(to right,#666 0 1px,transparent 1px 2px);"></div>
<svg class="r" style="left:31.00px;top:807.00px" width="20" height="16" viewBox="0 0 20 16"><path d="M1.3 2.8V14.2H12.3V6.3" fill="none" stroke="#6e6e6e" stroke-width="2"/><rect x="0.3" y="7" width="13" height="2.6" fill="#6e6e6e"/><rect x="4" y="2.8" width="2.4" height="3.2" fill="#6e6e6e"/><rect x="9.8" y="2.2" width="5.4" height="2.4" fill="#12a13a"/><polygon points="14.6,-0.3 19.9,3.4 14.6,7.1" fill="#12a13a"/></svg>
<div class="r" style="left:17.00px;top:365.00px;width:1.00px;height:91.00px;background:repeating-linear-gradient(to bottom,#666 0 1px,transparent 1px 2px);"></div>
<div class="r" style="left:17.00px;top:485.00px;width:1.00px;height:211.00px;background:repeating-linear-gradient(to bottom,#666 0 1px,transparent 1px 2px);"></div>
<div class="r" style="left:17.00px;top:805.00px;width:1.00px;height:11.00px;background:repeating-linear-gradient(to bottom,#666 0 1px,transparent 1px 2px);"></div>
<!-- editor -->
<div class="r" style="left:263.00px;top:197.00px;width:1657.00px;height:2.00px;background:#bdbdbd;"></div>
<div class="r" style="left:263.20px;top:197.00px;width:1.30px;height:804.00px;background:#c0c0c0;"></div>
<div class="r" style="left:1918.80px;top:197.00px;width:1.20px;height:804.00px;background:#b4b4b4;"></div>
<div class="r" style="left:265.50px;top:199.80px;width:1652.00px;height:27.60px;background:#f0f0f0;"></div>
<svg class="r" style="left:270.60px;top:205.30px" width="18" height="18" viewBox="0 0 18 18"><circle cx="9" cy="9" r="6.7" fill="#c9deef" stroke="#1b6fb4" stroke-width="4"/></svg>
<span class="t" style="left:300.00px;top:204px;font-size:14.00px;line-height:20px;color:#686868;letter-spacing:-0.650px;">RatesNew.DPLPack*</span>
<div class="r" style="left:426.00px;top:204.00px;width:1.00px;height:20.50px;background:#9a9a9a;"></div>
<span class="t" style="left:436.40px;top:204px;font-size:14.00px;line-height:20px;color:#686868;letter-spacing:-0.490px;">NewFunction</span>
<div class="r" style="left:519.00px;top:204.00px;width:1.00px;height:20.50px;background:#9a9a9a;"></div>
<span class="t" style="left:529.20px;top:204px;font-size:14.00px;line-height:20px;color:#686868;letter-spacing:-0.749px;">Combine_CSV_Anesthesia_GPCI*</span>
<div class="r" style="left:732.50px;top:204.00px;width:184.30px;height:21.00px;background:#f7f7f7;"></div>
<span class="t" style="left:742.40px;top:204px;font-size:14.00px;line-height:20px;color:#000;font-weight:bold;letter-spacing:0.221px;">AllNeededDataToExport*</span>
<div class="r" style="left:916.80px;top:204.00px;width:2.00px;height:21.00px;background:#222;"></div>
<div class="r" style="left:1855.00px;top:205.00px;width:17.00px;height:18.30px;background:#f7f3ea;"></div>
<div class="r" style="left:1874.30px;top:205.00px;width:16.70px;height:18.30px;background:#f7f3ea;"></div>
<svg class="r" style="left:1859.70px;top:207.30px" width="7" height="12" viewBox="0 0 7 12"><polygon points="6.5,0 6.5,11.6 0,5.8" fill="#555"/></svg>
<svg class="r" style="left:1878.70px;top:207.30px" width="7" height="12" viewBox="0 0 7 12"><polygon points="0,0 0,11.6 6.5,5.8" fill="#555"/></svg>
<svg class="r" style="left:1896.00px;top:209.00px" width="11" height="9" viewBox="0 0 11 9"><path d="M0.5 0.3L10 8.6M10 0.3L0.5 8.6" stroke="#444" stroke-width="1.6"/></svg>
<div class="r" style="left:265.50px;top:227.40px;width:49.30px;height:521.00px;background:#f0f0f0;"></div>
<span class="t c" style="left:302.85px;top:228px">1</span>
<span class="t c" style="left:315.40px;top:228px">select(</span>
<span class="t c" style="left:302.85px;top:247px">2</span>
<span class="t c" style="left:315.40px;top:247px">[CombinedData.HCPCS],</span>
<span class="t c" style="left:302.85px;top:266px">3</span>
<span class="t c" style="left:315.40px;top:266px">[CombinedData.Modifiers],</span>
<span class="t c" style="left:302.85px;top:284px">4</span>
<span class="t c" style="left:315.40px;top:284px">[CombinedData.MAC_Locality],</span>
<span class="t c" style="left:302.85px;top:303px">5</span>
<span class="t c" style="left:315.40px;top:303px">[CombinedData.LocalityName],</span>
<span class="t c" style="left:302.85px;top:322px">6</span>
<span class="t c" style="left:315.40px;top:322px">round([CombinedData.NonFacilityFeeScheduleAmount],2)as <span class="s">&quot;NonFacilityFeeScheduleAmount&quot;</span>,</span>
<span class="t c" style="left:302.85px;top:341px">7</span>
<span class="t c" style="left:315.40px;top:341px">round([CombinedData.NonFacilityLimitingCharge],2) as <span class="s">&quot;NonFacilityLimitingCharge&quot;</span>,</span>
<span class="t c" style="left:302.85px;top:359px">8</span>
<span class="t c" style="left:315.40px;top:359px">round([CombinedData.FacilityFeeScheduleAmount],2) as <span class="s">&quot;FacilityFeeScheduleAmount&quot;</span>,</span>
<span class="t c" style="left:302.85px;top:378px">9</span>
<span class="t c" style="left:315.40px;top:378px">round([CombinedData.FacilityLimitingCharge],2) as <span class="s">&quot;FacilityLimitingCharge&quot;</span>,</span>
<span class="t c" style="left:294.10px;top:397px">10</span>
<span class="t c" style="left:315.40px;top:397px">[CombinedData.PCTC_Indicator],</span>
<span class="t c" style="left:294.10px;top:415px">11</span>
<span class="t c" style="left:315.40px;top:415px">[CombinedData.Status_Code],</span>
<span class="t c" style="left:294.10px;top:434px">12</span>
<span class="t c" style="left:315.40px;top:434px">round([CombinedData.OPPSNonFacilityFeeAmount],4) as <span class="s">&quot;OPPSNonFacilityFeeAmount&quot;</span>,</span>
<span class="t c" style="left:294.10px;top:453px">13</span>
<span class="t c" style="left:315.40px;top:453px">round([CombinedData.OPPSFacilityFeeAmount],4) as <span class="s">&quot;OPPSFacilityFeeAmount&quot;</span>,</span>
<span class="t c" style="left:294.10px;top:472px">14</span>
<span class="t c" style="left:315.40px;top:472px">round([CombinedData.PW_GPCI],4) as <span class="s">&quot;PW_GPCI&quot;</span>,</span>
<span class="t c" style="left:294.10px;top:490px">15</span>
<span class="t c" style="left:315.40px;top:490px">round([CombinedData.PE_GPCI],4) as <span class="s">&quot;PE_GPCI&quot;</span>)</span>
<span class="t c" style="left:294.10px;top:509px">16</span>
<div class="r" style="left:709.36px;top:491.33px;width:1.00px;height:17.00px;background:#000;"></div>
<svg class="r" style="left:0;top:0" width="0" height="0"><defs><linearGradient id="eg" x1="0" y1="0" x2="0" y2="1"><stop offset="0" stop-color="#ffffff"/><stop offset="0.5" stop-color="#fbfbfb"/><stop offset="1" stop-color="#e2e2e2"/></linearGradient></defs></svg>
<div class="r" style="left:1557.00px;top:243.00px;width:1.00px;height:250.00px;background:repeating-linear-gradient(to bottom,#666 0 1px,transparent 1px 2px);"></div>
<div class="r" style="left:1580.00px;top:248.00px;width:1.00px;height:190.00px;background:repeating-linear-gradient(to bottom,#666 0 1px,transparent 1px 2px);"></div>
<div class="r" style="left:1580.00px;top:468.00px;width:1.00px;height:10.00px;background:repeating-linear-gradient(to bottom,#666 0 1px,transparent 1px 2px);"></div>
<div class="r" style="left:1580.00px;top:508.00px;width:1.00px;height:240.00px;background:repeating-linear-gradient(to bottom,#666 0 1px,transparent 1px 2px);"></div>
<div class="r" style="left:1604.00px;top:523.00px;width:1.00px;height:35.00px;background:repeating-linear-gradient(to bottom,#666 0 1px,transparent 1px 2px);"></div>
<div class="r" style="left:1563.00px;top:237.00px;width:7.00px;height:1.00px;background:repeating-linear-gradient(to right,#666 0 1px,transparent 1px 2px);"></div>
<svg class="r" style="left:1551.35px;top:232.75px" width="11.3" height="11.3" viewBox="0 0 11.3 11.3"><rect x="0.7" y="0.7" width="9.9" height="9.9" rx="1.8" fill="url(#eg)" stroke="#a3a3a3" stroke-width="1.4"/><path d="M2.9 5.65H8.4" stroke="#5b6dc0" stroke-width="1.4"/></svg>
<svg class="r" style="left:1570.10px;top:226.90px" width="22" height="18.7" viewBox="0 0 20 17"><path d="M0.9 3H6.7L8 4.7H12.9V9H4.5L0.9 14.3Z" fill="#ffc65c"/><path d="M4.7 8.8H18.1L15.2 14.9H2.1Z" fill="#ffc800"/></svg>
<span class="t" style="left:1595.40px;top:229px;font-size:13.00px;line-height:18px;color:#111;letter-spacing:0.130px;">Queries</span>
<div class="r" style="left:1586.70px;top:257.00px;width:5.70px;height:1.00px;background:repeating-linear-gradient(to right,#666 0 1px,transparent 1px 2px);"></div>
<svg class="r" style="left:1575.05px;top:252.75px" width="11.3" height="11.3" viewBox="0 0 11.3 11.3"><rect x="0.7" y="0.7" width="9.9" height="9.9" rx="1.8" fill="url(#eg)" stroke="#a3a3a3" stroke-width="1.4"/><path d="M2.9 5.65H8.4" stroke="#5b6dc0" stroke-width="1.4"/><path d="M5.65 2.9V8.4" stroke="#2f3f86" stroke-width="1.3"/></svg>
<svg class="r" style="left:1593.40px;top:249.00px" width="18" height="15" viewBox="0 0 18 15"><rect x="0" y="1.4" width="4.9" height="3.6" fill="#1467d4"/><rect x="6" y="1.4" width="4.9" height="3.6" fill="#1467d4"/><rect x="0" y="6.2" width="4.9" height="3.6" fill="#1467d4"/><rect x="6" y="6.2" width="4.9" height="3.6" fill="#1467d4"/><rect x="12" y="6.2" width="4.9" height="3.6" fill="#c9c9c9"/><rect x="0" y="11" width="4.9" height="3.6" fill="#c9c9c9"/><rect x="6" y="11" width="4.9" height="3.6" fill="#c9c9c9"/><rect x="12" y="11" width="4.9" height="3.6" fill="#c9c9c9"/><polygon points="15.20,-1.10 15.93,0.44 17.53,-0.13 16.96,1.47 18.50,2.20 16.96,2.93 17.53,4.53 15.93,3.96 15.20,5.50 14.47,3.96 12.87,4.53 13.44,2.93 11.90,2.20 13.44,1.47 12.87,-0.13 14.47,0.44" fill="#ffb400"/></svg>
<span class="t" style="left:1619.50px;top:249px;font-size:13.00px;line-height:18px;color:#111;letter-spacing:0.206px;">All_Data_stdQ</span>
<div class="r" style="left:1586.70px;top:277.00px;width:5.70px;height:1.00px;background:repeating-linear-gradient(to right,#666 0 1px,transparent 1px 2px);"></div>
<svg class="r" style="left:1575.05px;top:272.75px" width="11.3" height="11.3" viewBox="0 0 11.3 11.3"><rect x="0.7" y="0.7" width="9.9" height="9.9" rx="1.8" fill="url(#eg)" stroke="#a3a3a3" stroke-width="1.4"/><path d="M2.9 5.65H8.4" stroke="#5b6dc0" stroke-width="1.4"/><path d="M5.65 2.9V8.4" stroke="#2f3f86" stroke-width="1.3"/></svg>
<svg class="r" style="left:1593.40px;top:269.00px" width="18" height="15" viewBox="0 0 18 15"><rect x="0" y="1.4" width="4.9" height="3.6" fill="#1467d4"/><rect x="6" y="1.4" width="4.9" height="3.6" fill="#1467d4"/><rect x="0" y="6.2" width="4.9" height="3.6" fill="#1467d4"/><rect x="6" y="6.2" width="4.9" height="3.6" fill="#1467d4"/><rect x="12" y="6.2" width="4.9" height="3.6" fill="#c9c9c9"/><rect x="0" y="11" width="4.9" height="3.6" fill="#c9c9c9"/><rect x="6" y="11" width="4.9" height="3.6" fill="#c9c9c9"/><rect x="12" y="11" width="4.9" height="3.6" fill="#c9c9c9"/><polygon points="15.20,-1.10 15.93,0.44 17.53,-0.13 16.96,1.47 18.50,2.20 16.96,2.93 17.53,4.53 15.93,3.96 15.20,5.50 14.47,3.96 12.87,4.53 13.44,2.93 11.90,2.20 13.44,1.47 12.87,-0.13 14.47,0.44" fill="#ffb400"/></svg>
<span class="t" style="left:1619.50px;top:269px;font-size:13.00px;line-height:18px;color:#111;letter-spacing:0.194px;">Anesthesia_AllData_stdQ</span>
<div class="r" style="left:1586.70px;top:297.00px;width:5.70px;height:1.00px;background:repeating-linear-gradient(to right,#666 0 1px,transparent 1px 2px);"></div>
<svg class="r" style="left:1575.05px;top:292.75px" width="11.3" height="11.3" viewBox="0 0 11.3 11.3"><rect x="0.7" y="0.7" width="9.9" height="9.9" rx="1.8" fill="url(#eg)" stroke="#a3a3a3" stroke-width="1.4"/><path d="M2.9 5.65H8.4" stroke="#5b6dc0" stroke-width="1.4"/><path d="M5.65 2.9V8.4" stroke="#2f3f86" stroke-width="1.3"/></svg>
<svg class="r" style="left:1593.40px;top:289.00px" width="18" height="15" viewBox="0 0 18 15"><rect x="0" y="1.4" width="4.9" height="3.6" fill="#1467d4"/><rect x="6" y="1.4" width="4.9" height="3.6" fill="#1467d4"/><rect x="0" y="6.2" width="4.9" height="3.6" fill="#1467d4"/><rect x="6" y="6.2" width="4.9" height="3.6" fill="#1467d4"/><rect x="12" y="6.2" width="4.9" height="3.6" fill="#c9c9c9"/><rect x="0" y="11" width="4.9" height="3.6" fill="#c9c9c9"/><rect x="6" y="11" width="4.9" height="3.6" fill="#c9c9c9"/><rect x="12" y="11" width="4.9" height="3.6" fill="#c9c9c9"/><polygon points="15.20,-1.10 15.93,0.44 17.53,-0.13 16.96,1.47 18.50,2.20 16.96,2.93 17.53,4.53 15.93,3.96 15.20,5.50 14.47,3.96 12.87,4.53 13.44,2.93 11.90,2.20 13.44,1.47 12.87,-0.13 14.47,0.44" fill="#ffb400"/></svg>
<span class="t" style="left:1619.50px;top:289px;font-size:13.00px;line-height:18px;color:#111;letter-spacing:-0.133px;">Combine_CSV_Anesthesia_GPCI</span>
<div class="r" style="left:1586.70px;top:317.00px;width:5.70px;height:1.00px;background:repeating-linear-gradient(to right,#666 0 1px,transparent 1px 2px);"></div>
<svg class="r" style="left:1575.05px;top:312.75px" width="11.3" height="11.3" viewBox="0 0 11.3 11.3"><rect x="0.7" y="0.7" width="9.9" height="9.9" rx="1.8" fill="url(#eg)" stroke="#a3a3a3" stroke-width="1.4"/><path d="M2.9 5.65H8.4" stroke="#5b6dc0" stroke-width="1.4"/><path d="M5.65 2.9V8.4" stroke="#2f3f86" stroke-width="1.3"/></svg>
<svg class="r" style="left:1593.40px;top:309.00px" width="18" height="15" viewBox="0 0 18 15"><rect x="0" y="1.4" width="4.9" height="3.6" fill="#1467d4"/><rect x="6" y="1.4" width="4.9" height="3.6" fill="#1467d4"/><rect x="0" y="6.2" width="4.9" height="3.6" fill="#1467d4"/><rect x="6" y="6.2" width="4.9" height="3.6" fill="#1467d4"/><rect x="12" y="6.2" width="4.9" height="3.6" fill="#c9c9c9"/><rect x="0" y="11" width="4.9" height="3.6" fill="#c9c9c9"/><rect x="6" y="11" width="4.9" height="3.6" fill="#c9c9c9"/><rect x="12" y="11" width="4.9" height="3.6" fill="#c9c9c9"/><polygon points="15.20,-1.10 15.93,0.44 17.53,-0.13 16.96,1.47 18.50,2.20 16.96,2.93 17.53,4.53 15.93,3.96 15.20,5.50 14.47,3.96 12.87,4.53 13.44,2.93 11.90,2.20 13.44,1.47 12.87,-0.13 14.47,0.44" fill="#ffb400"/></svg>
<span class="t" style="left:1619.50px;top:309px;font-size:13.00px;line-height:18px;color:#111;letter-spacing:-0.021px;">Combine_CSVAndAnesthesia</span>
<div class="r" style="left:1586.70px;top:337.00px;width:5.70px;height:1.00px;background:repeating-linear-gradient(to right,#666 0 1px,transparent 1px 2px);"></div>
<svg class="r" style="left:1575.05px;top:332.75px" width="11.3" height="11.3" viewBox="0 0 11.3 11.3"><rect x="0.7" y="0.7" width="9.9" height="9.9" rx="1.8" fill="url(#eg)" stroke="#a3a3a3" stroke-width="1.4"/><path d="M2.9 5.65H8.4" stroke="#5b6dc0" stroke-width="1.4"/><path d="M5.65 2.9V8.4" stroke="#2f3f86" stroke-width="1.3"/></svg>
<svg class="r" style="left:1593.40px;top:329.00px" width="18" height="15" viewBox="0 0 18 15"><rect x="0" y="1.4" width="4.9" height="3.6" fill="#1467d4"/><rect x="6" y="1.4" width="4.9" height="3.6" fill="#1467d4"/><rect x="0" y="6.2" width="4.9" height="3.6" fill="#1467d4"/><rect x="6" y="6.2" width="4.9" height="3.6" fill="#1467d4"/><rect x="12" y="6.2" width="4.9" height="3.6" fill="#c9c9c9"/><rect x="0" y="11" width="4.9" height="3.6" fill="#c9c9c9"/><rect x="6" y="11" width="4.9" height="3.6" fill="#c9c9c9"/><rect x="12" y="11" width="4.9" height="3.6" fill="#c9c9c9"/><polygon points="15.20,-1.10 15.93,0.44 17.53,-0.13 16.96,1.47 18.50,2.20 16.96,2.93 17.53,4.53 15.93,3.96 15.20,5.50 14.47,3.96 12.87,4.53 13.44,2.93 11.90,2.20 13.44,1.47 12.87,-0.13 14.47,0.44" fill="#ffb400"/></svg>
<span class="t" style="left:1619.50px;top:329px;font-size:13.00px;line-height:18px;color:#111;letter-spacing:0.016px;">CombinedData</span>
<div class="r" style="left:1586.70px;top:357.00px;width:5.70px;height:1.00px;background:repeating-linear-gradient(to right,#666 0 1px,transparent 1px 2px);"></div>
<svg class="r" style="left:1575.05px;top:352.75px" width="11.3" height="11.3" viewBox="0 0 11.3 11.3"><rect x="0.7" y="0.7" width="9.9" height="9.9" rx="1.8" fill="url(#eg)" stroke="#a3a3a3" stroke-width="1.4"/><path d="M2.9 5.65H8.4" stroke="#5b6dc0" stroke-width="1.4"/><path d="M5.65 2.9V8.4" stroke="#2f3f86" stroke-width="1.3"/></svg>
<svg class="r" style="left:1593.40px;top:349.00px" width="18" height="15" viewBox="0 0 18 15"><rect x="0" y="1.4" width="4.9" height="3.6" fill="#1467d4"/><rect x="6" y="1.4" width="4.9" height="3.6" fill="#1467d4"/><rect x="0" y="6.2" width="4.9" height="3.6" fill="#1467d4"/><rect x="6" y="6.2" width="4.9" height="3.6" fill="#1467d4"/><rect x="12" y="6.2" width="4.9" height="3.6" fill="#c9c9c9"/><rect x="0" y="11" width="4.9" height="3.6" fill="#c9c9c9"/><rect x="6" y="11" width="4.9" height="3.6" fill="#c9c9c9"/><rect x="12" y="11" width="4.9" height="3.6" fill="#c9c9c9"/><polygon points="15.20,-1.10 15.93,0.44 17.53,-0.13 16.96,1.47 18.50,2.20 16.96,2.93 17.53,4.53 15.93,3.96 15.20,5.50 14.47,3.96 12.87,4.53 13.44,2.93 11.90,2.20 13.44,1.47 12.87,-0.13 14.47,0.44" fill="#ffb400"/></svg>
<span class="t" style="left:1619.50px;top:349px;font-size:13.00px;line-height:18px;color:#111;letter-spacing:0.012px;">GPCI_AllData_stdQ</span>
<div class="r" style="left:1586.70px;top:377.00px;width:5.70px;height:1.00px;background:repeating-linear-gradient(to right,#666 0 1px,transparent 1px 2px);"></div>
<svg class="r" style="left:1575.05px;top:372.75px" width="11.3" height="11.3" viewBox="0 0 11.3 11.3"><rect x="0.7" y="0.7" width="9.9" height="9.9" rx="1.8" fill="url(#eg)" stroke="#a3a3a3" stroke-width="1.4"/><path d="M2.9 5.65H8.4" stroke="#5b6dc0" stroke-width="1.4"/><path d="M5.65 2.9V8.4" stroke="#2f3f86" stroke-width="1.3"/></svg>
<svg class="r" style="left:1593.40px;top:369.00px" width="18" height="15" viewBox="0 0 18 15"><rect x="0" y="1.4" width="4.9" height="3.6" fill="#1467d4"/><rect x="6" y="1.4" width="4.9" height="3.6" fill="#1467d4"/><rect x="0" y="6.2" width="4.9" height="3.6" fill="#1467d4"/><rect x="6" y="6.2" width="4.9" height="3.6" fill="#1467d4"/><rect x="12" y="6.2" width="4.9" height="3.6" fill="#c9c9c9"/><rect x="0" y="11" width="4.9" height="3.6" fill="#c9c9c9"/><rect x="6" y="11" width="4.9" height="3.6" fill="#c9c9c9"/><rect x="12" y="11" width="4.9" height="3.6" fill="#c9c9c9"/><polygon points="15.20,-1.10 15.93,0.44 17.53,-0.13 16.96,1.47 18.50,2.20 16.96,2.93 17.53,4.53 15.93,3.96 15.20,5.50 14.47,3.96 12.87,4.53 13.44,2.93 11.90,2.20 13.44,1.47 12.87,-0.13 14.47,0.44" fill="#ffb400"/></svg>
<span class="t" style="left:1619.50px;top:369px;font-size:13.00px;line-height:18px;color:#111;letter-spacing:0.253px;">New Standard Query</span>
<div class="r" style="left:1586.70px;top:397.00px;width:5.70px;height:1.00px;background:repeating-linear-gradient(to right,#666 0 1px,transparent 1px 2px);"></div>
<svg class="r" style="left:1575.05px;top:392.75px" width="11.3" height="11.3" viewBox="0 0 11.3 11.3"><rect x="0.7" y="0.7" width="9.9" height="9.9" rx="1.8" fill="url(#eg)" stroke="#a3a3a3" stroke-width="1.4"/><path d="M2.9 5.65H8.4" stroke="#5b6dc0" stroke-width="1.4"/><path d="M5.65 2.9V8.4" stroke="#2f3f86" stroke-width="1.3"/></svg>
<svg class="r" style="left:1593.40px;top:389.00px" width="18" height="15" viewBox="0 0 18 15"><rect x="0" y="1.4" width="4.9" height="3.6" fill="#1467d4"/><rect x="6" y="1.4" width="4.9" height="3.6" fill="#1467d4"/><rect x="0" y="6.2" width="4.9" height="3.6" fill="#1467d4"/><rect x="6" y="6.2" width="4.9" height="3.6" fill="#1467d4"/><rect x="12" y="6.2" width="4.9" height="3.6" fill="#c9c9c9"/><rect x="0" y="11" width="4.9" height="3.6" fill="#c9c9c9"/><rect x="6" y="11" width="4.9" height="3.6" fill="#c9c9c9"/><rect x="12" y="11" width="4.9" height="3.6" fill="#c9c9c9"/><polygon points="15.20,-1.10 15.93,0.44 17.53,-0.13 16.96,1.47 18.50,2.20 16.96,2.93 17.53,4.53 15.93,3.96 15.20,5.50 14.47,3.96 12.87,4.53 13.44,2.93 11.90,2.20 13.44,1.47 12.87,-0.13 14.47,0.44" fill="#ffb400"/></svg>
<span class="t" style="left:1619.50px;top:389px;font-size:13.00px;line-height:18px;color:#111;letter-spacing:-0.026px;">PPRRVU24_AllInfos_stdQ</span>
<div class="r" style="left:1586.70px;top:417.00px;width:5.70px;height:1.00px;background:repeating-linear-gradient(to right,#666 0 1px,transparent 1px 2px);"></div>
<svg class="r" style="left:1575.05px;top:412.75px" width="11.3" height="11.3" viewBox="0 0 11.3 11.3"><rect x="0.7" y="0.7" width="9.9" height="9.9" rx="1.8" fill="url(#eg)" stroke="#a3a3a3" stroke-width="1.4"/><path d="M2.9 5.65H8.4" stroke="#5b6dc0" stroke-width="1.4"/><path d="M5.65 2.9V8.4" stroke="#2f3f86" stroke-width="1.3"/></svg>
<svg class="r" style="left:1593.40px;top:409.00px" width="18" height="15" viewBox="0 0 18 15"><rect x="0" y="1.4" width="4.9" height="3.6" fill="#1467d4"/><rect x="6" y="1.4" width="4.9" height="3.6" fill="#1467d4"/><rect x="0" y="6.2" width="4.9" height="3.6" fill="#1467d4"/><rect x="6" y="6.2" width="4.9" height="3.6" fill="#1467d4"/><rect x="12" y="6.2" width="4.9" height="3.6" fill="#c9c9c9"/><rect x="0" y="11" width="4.9" height="3.6" fill="#c9c9c9"/><rect x="6" y="11" width="4.9" height="3.6" fill="#c9c9c9"/><rect x="12" y="11" width="4.9" height="3.6" fill="#c9c9c9"/><polygon points="15.20,-1.10 15.93,0.44 17.53,-0.13 16.96,1.47 18.50,2.20 16.96,2.93 17.53,4.53 15.93,3.96 15.20,5.50 14.47,3.96 12.87,4.53 13.44,2.93 11.90,2.20 13.44,1.47 12.87,-0.13 14.47,0.44" fill="#ffb400"/></svg>
<span class="t" style="left:1619.50px;top:409px;font-size:13.00px;line-height:18px;color:#111;letter-spacing:-0.338px;">PPRRVU24_MOD_Values</span>
<div class="r" style="left:1586.70px;top:437.00px;width:5.70px;height:1.00px;background:repeating-linear-gradient(to right,#666 0 1px,transparent 1px 2px);"></div>
<svg class="r" style="left:1575.05px;top:432.75px" width="11.3" height="11.3" viewBox="0 0 11.3 11.3"><rect x="0.7" y="0.7" width="9.9" height="9.9" rx="1.8" fill="url(#eg)" stroke="#a3a3a3" stroke-width="1.4"/><path d="M2.9 5.65H8.4" stroke="#5b6dc0" stroke-width="1.4"/><path d="M5.65 2.9V8.4" stroke="#2f3f86" stroke-width="1.3"/></svg>
<svg class="r" style="left:1593.40px;top:429.00px" width="18" height="15" viewBox="0 0 18 15"><rect x="0" y="1.4" width="4.9" height="3.6" fill="#1467d4"/><rect x="6" y="1.4" width="4.9" height="3.6" fill="#1467d4"/><rect x="0" y="6.2" width="4.9" height="3.6" fill="#1467d4"/><rect x="6" y="6.2" width="4.9" height="3.6" fill="#1467d4"/><rect x="12" y="6.2" width="4.9" height="3.6" fill="#c9c9c9"/><rect x="0" y="11" width="4.9" height="3.6" fill="#c9c9c9"/><rect x="6" y="11" width="4.9" height="3.6" fill="#c9c9c9"/><rect x="12" y="11" width="4.9" height="3.6" fill="#c9c9c9"/><polygon points="15.20,-1.10 15.93,0.44 17.53,-0.13 16.96,1.47 18.50,2.20 16.96,2.93 17.53,4.53 15.93,3.96 15.20,5.50 14.47,3.96 12.87,4.53 13.44,2.93 11.90,2.20 13.44,1.47 12.87,-0.13 14.47,0.44" fill="#ffb400"/></svg>
<span class="t" style="left:1619.50px;top:429px;font-size:13.00px;line-height:18px;color:#111;letter-spacing:0.044px;">roundAndLimitValues</span>
<div class="r" style="left:1563.00px;top:457.00px;width:7.00px;height:1.00px;background:repeating-linear-gradient(to right,#666 0 1px,transparent 1px 2px);"></div>
<svg class="r" style="left:1551.35px;top:452.75px" width="11.3" height="11.3" viewBox="0 0 11.3 11.3"><rect x="0.7" y="0.7" width="9.9" height="9.9" rx="1.8" fill="url(#eg)" stroke="#a3a3a3" stroke-width="1.4"/><path d="M2.9 5.65H8.4" stroke="#5b6dc0" stroke-width="1.4"/></svg>
<svg class="r" style="left:1570.10px;top:446.90px" width="22" height="18.7" viewBox="0 0 20 17"><path d="M0.9 3H6.7L8 4.7H12.9V9H4.5L0.9 14.3Z" fill="#ffc65c"/><path d="M4.7 8.8H18.1L15.2 14.9H2.1Z" fill="#ffc800"/></svg>
<span class="t" style="left:1595.40px;top:449px;font-size:13.00px;line-height:18px;color:#111;letter-spacing:0.106px;">User Functions</span>
<div class="r" style="left:1581.70px;top:477.00px;width:10.70px;height:1.00px;background:repeating-linear-gradient(to right,#666 0 1px,transparent 1px 2px);"></div>
<svg class="r" style="left:1593.40px;top:469.00px" width="21" height="18" viewBox="0 0 21 18"><rect x="0" y="1.4" width="4.9" height="3.6" fill="#1467d4"/><rect x="6" y="1.4" width="4.9" height="3.6" fill="#1467d4"/><rect x="12" y="1.4" width="4.9" height="3.6" fill="#c9c9c9"/><rect x="0" y="6.2" width="4.9" height="3.6" fill="#1467d4"/><rect x="6" y="6.2" width="4.9" height="3.6" fill="#1467d4"/><rect x="12" y="6.2" width="4.9" height="3.6" fill="#c9c9c9"/><rect x="0" y="11" width="4.9" height="3.6" fill="#c9c9c9"/><rect x="6" y="11" width="4.9" height="3.6" fill="#c9c9c9"/><polygon points="15,7 18,5 21,8 12,18 8,18 9,14" fill="#fff"/><polygon points="19.47,8.73 18.23,10.13 15.69,7.87 16.93,6.47" fill="#1467d4"/><polygon points="17.56,10.87 13.30,15.67 10.76,13.42 15.02,8.62" fill="#1467d4"/><polygon points="12.29,16.25 10.20,16.60 10.31,14.49" fill="#1467d4"/></svg>
<span class="t" style="left:1619.50px;top:469px;font-size:13.00px;line-height:18px;color:#111;letter-spacing:0.092px;">NewUserFunction</span>
<div class="r" style="left:1563.00px;top:497.00px;width:7.00px;height:1.00px;background:repeating-linear-gradient(to right,#666 0 1px,transparent 1px 2px);"></div>
<svg class="r" style="left:1551.35px;top:492.75px" width="11.3" height="11.3" viewBox="0 0 11.3 11.3"><rect x="0.7" y="0.7" width="9.9" height="9.9" rx="1.8" fill="url(#eg)" stroke="#a3a3a3" stroke-width="1.4"/><path d="M2.9 5.65H8.4" stroke="#5b6dc0" stroke-width="1.4"/></svg>
<svg class="r" style="left:1570.10px;top:486.90px" width="22" height="18.7" viewBox="0 0 20 17"><path d="M0.9 3H6.7L8 4.7H12.9V9H4.5L0.9 14.3Z" fill="#ffc65c"/><path d="M4.7 8.8H18.1L15.2 14.9H2.1Z" fill="#ffc800"/></svg>
<span class="t" style="left:1595.40px;top:489px;font-size:13.00px;line-height:18px;color:#111;letter-spacing:0.105px;">Functions</span>
<div class="r" style="left:1586.70px;top:517.00px;width:5.70px;height:1.00px;background:repeating-linear-gradient(to right,#666 0 1px,transparent 1px 2px);"></div>
<svg class="r" style="left:1575.05px;top:512.75px" width="11.3" height="11.3" viewBox="0 0 11.3 11.3"><rect x="0.7" y="0.7" width="9.9" height="9.9" rx="1.8" fill="url(#eg)" stroke="#a3a3a3" stroke-width="1.4"/><path d="M2.9 5.65H8.4" stroke="#5b6dc0" stroke-width="1.4"/></svg>
<svg class="r" style="left:1594.00px;top:506.90px" width="22" height="18.7" viewBox="0 0 20 17"><path d="M0.9 3H6.7L8 4.7H12.9V9H4.5L0.9 14.3Z" fill="#ffc65c"/><path d="M4.7 8.8H18.1L15.2 14.9H2.1Z" fill="#ffc800"/></svg>
<span class="t" style="left:1619.50px;top:509px;font-size:13.00px;line-height:18px;color:#111;letter-spacing:0.184px;">Approximate String Matching Functions</span>
<div class="r" style="left:1610.50px;top:537.00px;width:5.10px;height:1.00px;background:repeating-linear-gradient(to right,#666 0 1px,transparent 1px 2px);"></div>
<svg class="r" style="left:1598.85px;top:532.75px" width="11.3" height="11.3" viewBox="0 0 11.3 11.3"><rect x="0.7" y="0.7" width="9.9" height="9.9" rx="1.8" fill="url(#eg)" stroke="#a3a3a3" stroke-width="1.4"/><path d="M2.9 5.65H8.4" stroke="#5b6dc0" stroke-width="1.4"/><path d="M5.65 2.9V8.4" stroke="#2f3f86" stroke-width="1.3"/></svg>
<svg class="r" style="left:1616.60px;top:529.00px" width="21" height="18" viewBox="0 0 21 18"><rect x="0" y="1.4" width="4.9" height="3.6" fill="#1467d4"/><rect x="6" y="1.4" width="4.9" height="3.6" fill="#1467d4"/><rect x="12" y="1.4" width="4.9" height="3.6" fill="#c9c9c9"/><rect x="0" y="6.2" width="4.9" height="3.6" fill="#1467d4"/><rect x="6" y="6.2" width="4.9" height="3.6" fill="#1467d4"/><rect x="12" y="6.2" width="4.9" height="3.6" fill="#c9c9c9"/><rect x="0" y="11" width="4.9" height="3.6" fill="#c9c9c9"/><rect x="6" y="11" width="4.9" height="3.6" fill="#c9c9c9"/><polygon points="15,7 18,5 21,8 12,18 8,18 9,14" fill="#fff"/><polygon points="19.47,8.73 18.23,10.13 15.69,7.87 16.93,6.47" fill="#1467d4"/><polygon points="17.56,10.87 13.30,15.67 10.76,13.42 15.02,8.62" fill="#1467d4"/><polygon points="12.29,16.25 10.20,16.60 10.31,14.49" fill="#1467d4"/></svg>
<span class="t" style="left:1643.00px;top:529px;font-size:13.00px;line-height:18px;color:#111;letter-spacing:0.139px;">DoubleMetaphone</span>
<div class="r" style="left:1610.50px;top:557.00px;width:5.10px;height:1.00px;background:repeating-linear-gradient(to right,#666 0 1px,transparent 1px 2px);"></div>
<svg class="r" style="left:1598.85px;top:552.75px" width="11.3" height="11.3" viewBox="0 0 11.3 11.3"><rect x="0.7" y="0.7" width="9.9" height="9.9" rx="1.8" fill="url(#eg)" stroke="#a3a3a3" stroke-width="1.4"/><path d="M2.9 5.65H8.4" stroke="#5b6dc0" stroke-width="1.4"/><path d="M5.65 2.9V8.4" stroke="#2f3f86" stroke-width="1.3"/></svg>
<svg class="r" style="left:1616.60px;top:549.00px" width="21" height="18" viewBox="0 0 21 18"><rect x="0" y="1.4" width="4.9" height="3.6" fill="#1467d4"/><rect x="6" y="1.4" width="4.9" height="3.6" fill="#1467d4"/><rect x="12" y="1.4" width="4.9" height="3.6" fill="#c9c9c9"/><rect x="0" y="6.2" width="4.9" height="3.6" fill="#1467d4"/><rect x="6" y="6.2" width="4.9" height="3.6" fill="#1467d4"/><rect x="12" y="6.2" width="4.9" height="3.6" fill="#c9c9c9"/><rect x="0" y="11" width="4.9" height="3.6" fill="#c9c9c9"/><rect x="6" y="11" width="4.9" height="3.6" fill="#c9c9c9"/><polygon points="15,7 18,5 21,8 12,18 8,18 9,14" fill="#fff"/><polygon points="19.47,8.73 18.23,10.13 15.69,7.87 16.93,6.47" fill="#1467d4"/><polygon points="17.56,10.87 13.30,15.67 10.76,13.42 15.02,8.62" fill="#1467d4"/><polygon points="12.29,16.25 10.20,16.60 10.31,14.49" fill="#1467d4"/></svg>
<span class="t" style="left:1643.00px;top:549px;font-size:13.00px;line-height:18px;color:#111;letter-spacing:0.163px;">Soundex</span>
<div class="r" style="left:1586.70px;top:577.00px;width:5.70px;height:1.00px;background:repeating-linear-gradient(to right,#666 0 1px,transparent 1px 2px);"></div>
<svg class="r" style="left:1575.05px;top:572.75px" width="11.3" height="11.3" viewBox="0 0 11.3 11.3"><rect x="0.7" y="0.7" width="9.9" height="9.9" rx="1.8" fill="url(#eg)" stroke="#a3a3a3" stroke-width="1.4"/><path d="M2.9 5.65H8.4" stroke="#5b6dc0" stroke-width="1.4"/><path d="M5.65 2.9V8.4" stroke="#2f3f86" stroke-width="1.3"/></svg>
<svg class="r" style="left:1594.00px;top:566.90px" width="22" height="18.7" viewBox="0 0 20 17"><path d="M0.9 3H6.7L8 4.7H12.9V9H4.5L0.9 14.3Z" fill="#ffc65c"/><path d="M4.7 8.8H18.1L15.2 14.9H2.1Z" fill="#ffc800"/></svg>
<span class="t" style="left:1619.50px;top:569px;font-size:13.00px;line-height:18px;color:#111;letter-spacing:0.141px;">Conversion Functions</span>
<div class="r" style="left:1586.70px;top:597.00px;width:5.70px;height:1.00px;background:repeating-linear-gradient(to right,#666 0 1px,transparent 1px 2px);"></div>
<svg class="r" style="left:1575.05px;top:592.75px" width="11.3" height="11.3" viewBox="0 0 11.3 11.3"><rect x="0.7" y="0.7" width="9.9" height="9.9" rx="1.8" fill="url(#eg)" stroke="#a3a3a3" stroke-width="1.4"/><path d="M2.9 5.65H8.4" stroke="#5b6dc0" stroke-width="1.4"/><path d="M5.65 2.9V8.4" stroke="#2f3f86" stroke-width="1.3"/></svg>
<svg class="r" style="left:1594.00px;top:586.90px" width="22" height="18.7" viewBox="0 0 20 17"><path d="M0.9 3H6.7L8 4.7H12.9V9H4.5L0.9 14.3Z" fill="#ffc65c"/><path d="M4.7 8.8H18.1L15.2 14.9H2.1Z" fill="#ffc800"/></svg>
<span class="t" style="left:1619.50px;top:589px;font-size:13.00px;line-height:18px;color:#111;letter-spacing:0.117px;">Data Profiling Functions</span>
<div class="r" style="left:1586.70px;top:617.00px;width:5.70px;height:1.00px;background:repeating-linear-gradient(to right,#666 0 1px,transparent 1px 2px);"></div>
<svg class="r" style="left:1575.05px;top:612.75px" width="11.3" height="11.3" viewBox="0 0 11.3 11.3"><rect x="0.7" y="0.7" width="9.9" height="9.9" rx="1.8" fill="url(#eg)" stroke="#a3a3a3" stroke-width="1.4"/><path d="M2.9 5.65H8.4" stroke="#5b6dc0" stroke-width="1.4"/><path d="M5.65 2.9V8.4" stroke="#2f3f86" stroke-width="1.3"/></svg>
<svg class="r" style="left:1594.00px;top:606.90px" width="22" height="18.7" viewBox="0 0 20 17"><path d="M0.9 3H6.7L8 4.7H12.9V9H4.5L0.9 14.3Z" fill="#ffc65c"/><path d="M4.7 8.8H18.1L15.2 14.9H2.1Z" fill="#ffc800"/></svg>
<span class="t" style="left:1619.50px;top:609px;font-size:13.00px;line-height:18px;color:#111;letter-spacing:0.113px;">Date and Time Functions</span>
<div class="r" style="left:1586.70px;top:637.00px;width:5.70px;height:1.00px;background:repeating-linear-gradient(to right,#666 0 1px,transparent 1px 2px);"></div>
<svg class="r" style="left:1575.05px;top:632.75px" width="11.3" height="11.3" viewBox="0 0 11.3 11.3"><rect x="0.7" y="0.7" width="9.9" height="9.9" rx="1.8" fill="url(#eg)" stroke="#a3a3a3" stroke-width="1.4"/><path d="M2.9 5.65H8.4" stroke="#5b6dc0" stroke-width="1.4"/><path d="M5.65 2.9V8.4" stroke="#2f3f86" stroke-width="1.3"/></svg>
<svg class="r" style="left:1594.00px;top:626.90px" width="22" height="18.7" viewBox="0 0 20 17"><path d="M0.9 3H6.7L8 4.7H12.9V9H4.5L0.9 14.3Z" fill="#ffc65c"/><path d="M4.7 8.8H18.1L15.2 14.9H2.1Z" fill="#ffc800"/></svg>
<span class="t" style="left:1619.50px;top:629px;font-size:13.00px;line-height:18px;color:#111;letter-spacing:0.124px;">Environmental Functions</span>
<div class="r" style="left:1586.70px;top:657.00px;width:5.70px;height:1.00px;background:repeating-linear-gradient(to right,#666 0 1px,transparent 1px 2px);"></div>
<svg class="r" style="left:1575.05px;top:652.75px" width="11.3" height="11.3" viewBox="0 0 11.3 11.3"><rect x="0.7" y="0.7" width="9.9" height="9.9" rx="1.8" fill="url(#eg)" stroke="#a3a3a3" stroke-width="1.4"/><path d="M2.9 5.65H8.4" stroke="#5b6dc0" stroke-width="1.4"/><path d="M5.65 2.9V8.4" stroke="#2f3f86" stroke-width="1.3"/></svg>
<svg class="r" style="left:1594.00px;top:646.90px" width="22" height="18.7" viewBox="0 0 20 17"><path d="M0.9 3H6.7L8 4.7H12.9V9H4.5L0.9 14.3Z" fill="#ffc65c"/><path d="M4.7 8.8H18.1L15.2 14.9H2.1Z" fill="#ffc800"/></svg>
<span class="t" style="left:1619.50px;top:649px;font-size:13.00px;line-height:18px;color:#111;letter-spacing:0.085px;">Files And Directories</span>
<div class="r" style="left:1586.70px;top:677.00px;width:5.70px;height:1.00px;background:repeating-linear-gradient(to right,#666 0 1px,transparent 1px 2px);"></div>
<svg class="r" style="left:1575.05px;top:672.75px" width="11.3" height="11.3" viewBox="0 0 11.3 11.3"><rect x="0.7" y="0.7" width="9.9" height="9.9" rx="1.8" fill="url(#eg)" stroke="#a3a3a3" stroke-width="1.4"/><path d="M2.9 5.65H8.4" stroke="#5b6dc0" stroke-width="1.4"/><path d="M5.65 2.9V8.4" stroke="#2f3f86" stroke-width="1.3"/></svg>
<svg class="r" style="left:1594.00px;top:666.90px" width="22" height="18.7" viewBox="0 0 20 17"><path d="M0.9 3H6.7L8 4.7H12.9V9H4.5L0.9 14.3Z" fill="#ffc65c"/><path d="M4.7 8.8H18.1L15.2 14.9H2.1Z" fill="#ffc800"/></svg>
<span class="t" style="left:1619.50px;top:669px;font-size:13.00px;line-height:18px;color:#111;letter-spacing:0.005px;">Financial Functions</span>
<div class="r" style="left:1586.70px;top:697.00px;width:5.70px;height:1.00px;background:repeating-linear-gradient(to right,#666 0 1px,transparent 1px 2px);"></div>
<svg class="r" style="left:1575.05px;top:692.75px" width="11.3" height="11.3" viewBox="0 0 11.3 11.3"><rect x="0.7" y="0.7" width="9.9" height="9.9" rx="1.8" fill="url(#eg)" stroke="#a3a3a3" stroke-width="1.4"/><path d="M2.9 5.65H8.4" stroke="#5b6dc0" stroke-width="1.4"/><path d="M5.65 2.9V8.4" stroke="#2f3f86" stroke-width="1.3"/></svg>
<svg class="r" style="left:1594.00px;top:686.90px" width="22" height="18.7" viewBox="0 0 20 17"><path d="M0.9 3H6.7L8 4.7H12.9V9H4.5L0.9 14.3Z" fill="#ffc65c"/><path d="M4.7 8.8H18.1L15.2 14.9H2.1Z" fill="#ffc800"/></svg>
<span class="t" style="left:1619.50px;top:689px;font-size:13.00px;line-height:18px;color:#111;letter-spacing:0.150px;">Format Functions</span>
<div class="r" style="left:1586.70px;top:717.00px;width:5.70px;height:1.00px;background:repeating-linear-gradient(to right,#666 0 1px,transparent 1px 2px);"></div>
<svg class="r" style="left:1575.05px;top:712.75px" width="11.3" height="11.3" viewBox="0 0 11.3 11.3"><rect x="0.7" y="0.7" width="9.9" height="9.9" rx="1.8" fill="url(#eg)" stroke="#a3a3a3" stroke-width="1.4"/><path d="M2.9 5.65H8.4" stroke="#5b6dc0" stroke-width="1.4"/><path d="M5.65 2.9V8.4" stroke="#2f3f86" stroke-width="1.3"/></svg>
<svg class="r" style="left:1594.00px;top:706.90px" width="22" height="18.7" viewBox="0 0 20 17"><path d="M0.9 3H6.7L8 4.7H12.9V9H4.5L0.9 14.3Z" fill="#ffc65c"/><path d="M4.7 8.8H18.1L15.2 14.9H2.1Z" fill="#ffc800"/></svg>
<span class="t" style="left:1619.50px;top:709px;font-size:13.00px;line-height:18px;color:#111;letter-spacing:0.342px;">Identifier Management</span>
<div class="r" style="left:1586.70px;top:737.00px;width:5.70px;height:1.00px;background:repeating-linear-gradient(to right,#666 0 1px,transparent 1px 2px);"></div>
<svg class="r" style="left:1575.05px;top:732.75px" width="11.3" height="11.3" viewBox="0 0 11.3 11.3"><rect x="0.7" y="0.7" width="9.9" height="9.9" rx="1.8" fill="url(#eg)" stroke="#a3a3a3" stroke-width="1.4"/><path d="M2.9 5.65H8.4" stroke="#5b6dc0" stroke-width="1.4"/><path d="M5.65 2.9V8.4" stroke="#2f3f86" stroke-width="1.3"/></svg>
<svg class="r" style="left:1594.00px;top:726.90px" width="22" height="18.7" viewBox="0 0 20 17"><path d="M0.9 3H6.7L8 4.7H12.9V9H4.5L0.9 14.3Z" fill="#ffc65c"/><path d="M4.7 8.8H18.1L15.2 14.9H2.1Z" fill="#ffc800"/></svg>
<span class="t" style="left:1619.50px;top:729px;font-size:13.00px;line-height:18px;color:#111;letter-spacing:-0.030px;">Logical Functions</span>
<div class="r" style="left:1897.70px;top:227.40px;width:19.30px;height:521.00px;background:#f0f0f0;"></div>
<div class="r" style="left:1898.00px;top:249.00px;width:18.00px;height:365.00px;background:#cdcdcd;"></div>
<svg class="r" style="left:1902.00px;top:235.50px" width="10" height="7" viewBox="0 0 10 7"><path d="M0.8 6.2L5 2L9.2 6.2" fill="none" stroke="#555" stroke-width="2"/></svg>
<svg class="r" style="left:1902.00px;top:734.50px" width="10" height="7" viewBox="0 0 10 7"><path d="M0.8 0.8L5 5L9.2 0.8" fill="none" stroke="#555" stroke-width="2"/></svg>
<!-- bottom -->
<span class="t" style="left:267.90px;top:748px;font-size:13.60px;line-height:19px;color:#222;letter-spacing:0.256px;">Start row:</span>
<span class="t" style="left:593.60px;top:748px;font-size:13.60px;line-height:19px;color:#222;">1</span>
<span class="t" style="left:655.00px;top:748px;font-size:13.60px;line-height:19px;color:#222;letter-spacing:0.067px;">Max rows:</span>
<span class="t" style="left:980.50px;top:748px;font-size:13.60px;line-height:19px;color:#222;letter-spacing:-0.382px;">1k</span>
<span class="t" style="left:1042.50px;top:748px;font-size:13.60px;line-height:19px;color:#222;letter-spacing:-0.016px;">Row Count: unknown</span>
<div class="r" style="left:345.30px;top:756.60px;width:239.70px;height:4.40px;background:linear-gradient(to bottom,#d6e2f0 0%,#9db9dc 35%,#3f6fae 75%,#2f5f9e 100%);"></div>
<svg class="r" style="left:340.30px;top:748.80px" width="10" height="9.5" viewBox="0 0 10 9.5"><polygon points="0,0 10,0 5,9.4" fill="#d9b84a"/><polygon points="1.6,0.8 8.4,0.8 5,7" fill="#e8cf73"/></svg>
<div class="r" style="left:732.50px;top:756.60px;width:239.50px;height:4.40px;background:linear-gradient(to bottom,#d6e2f0 0%,#9db9dc 35%,#3f6fae 75%,#2f5f9e 100%);"></div>
<svg class="r" style="left:817.50px;top:748.80px" width="10" height="9.5" viewBox="0 0 10 9.5"><polygon points="0,0 10,0 5,9.4" fill="#d9b84a"/><polygon points="1.6,0.8 8.4,0.8 5,7" fill="#e8cf73"/></svg>
<div class="r" style="left:264.60px;top:765.00px;width:1654.00px;height:1.20px;background:#b4b4b4;"></div>
<div class="r" style="left:267.50px;top:767.00px;width:1.00px;height:229.00px;background:#dcdcdc;"></div>
<div class="r" style="left:1914.00px;top:767.00px;width:1.00px;height:229.00px;background:#dcdcdc;"></div>
<span class="t" style="left:284.40px;top:764px;font-size:21.60px;line-height:30px;color:#3c3c3c;letter-spacing:0.418px;">Notes</span>
<svg class="r" style="left:1883.00px;top:772.00px" width="9" height="12" viewBox="0 0 9 12"><path d="M1.6 0.7H7.4M2.7 0.7L2.3 5.3M6.3 0.7L6.7 5.3M0.6 5.9H8.4M4.5 6V11.4" fill="none" stroke="#6e6e6e" stroke-width="1.25"/><path d="M3.2 1.2H5.8L6.1 5.4H2.9Z" fill="#c9c9c9"/></svg>
<div class="r" style="left:331.70px;top:959.00px;width:1583.00px;height:1.00px;background:#dcdcdc;"></div>
<div class="r" style="left:267.50px;top:959.00px;width:5.00px;height:1.00px;background:#dcdcdc;"></div>
<div class="r" style="left:271.70px;top:959.00px;width:1.00px;height:33.00px;background:#d0d0d0;"></div>
<div class="r" style="left:271.70px;top:991.30px;width:60.50px;height:1.00px;background:#d0d0d0;"></div>
<div class="r" style="left:331.70px;top:959.00px;width:1.00px;height:33.00px;background:#d0d0d0;"></div>
<span class="t" style="left:284.00px;top:969px;font-size:13.60px;line-height:19px;color:#2b7cd3;letter-spacing:-0.057px;">Notes</span>
<span class="t" style="left:342.70px;top:969px;font-size:13.60px;line-height:19px;color:#444444;letter-spacing:0.090px;">Data</span>
<span class="t" style="left:395.70px;top:969px;font-size:13.60px;line-height:19px;color:#444444;letter-spacing:0.009px;">Status</span>
<span class="t" style="left:457.70px;top:969px;font-size:13.60px;line-height:19px;color:#444444;letter-spacing:-0.055px;">Error</span>
<div class="r" style="left:383.30px;top:965.00px;width:1.00px;height:25.00px;background:#dcdcdc;"></div>
<div class="r" style="left:446.00px;top:965.00px;width:1.00px;height:25.00px;background:#dcdcdc;"></div>
<div class="r" style="left:499.00px;top:965.00px;width:1.00px;height:25.00px;background:#dcdcdc;"></div>
<div class="r" style="left:267.50px;top:995.00px;width:1647.50px;height:1.00px;background:#dcdcdc;"></div>
<div class="r" style="left:263.00px;top:999.60px;width:1657.00px;height:1.60px;background:#c2c2c2;"></div>
<div class="r" style="left:0.00px;top:1002.30px;width:1920.00px;height:27.50px;background:#106ebe;"></div>
<span class="t" style="left:5.70px;top:1005px;font-size:15.40px;line-height:22px;color:#fff;letter-spacing:-0.225px;">Connection closed</span>
<div class="r" style="left:1107.60px;top:1003.00px;width:1.60px;height:26.70px;background:#a9c9e8;"></div>
<div class="r" style="left:0.00px;top:1029.70px;width:1920.00px;height:2.30px;background:#18232d;"></div>
<div class="r" style="left:60.00px;top:1030.20px;width:360.00px;height:1.80px;background:#f4f4f4;"></div>
<div class="r" style="left:918.00px;top:1030.20px;width:60.00px;height:1.80px;background:#4a5963;"></div>
<div class="r" style="left:1914.00px;top:1030.00px;width:1.00px;height:2.00px;background:#8a949c;"></div>
</body></html>
